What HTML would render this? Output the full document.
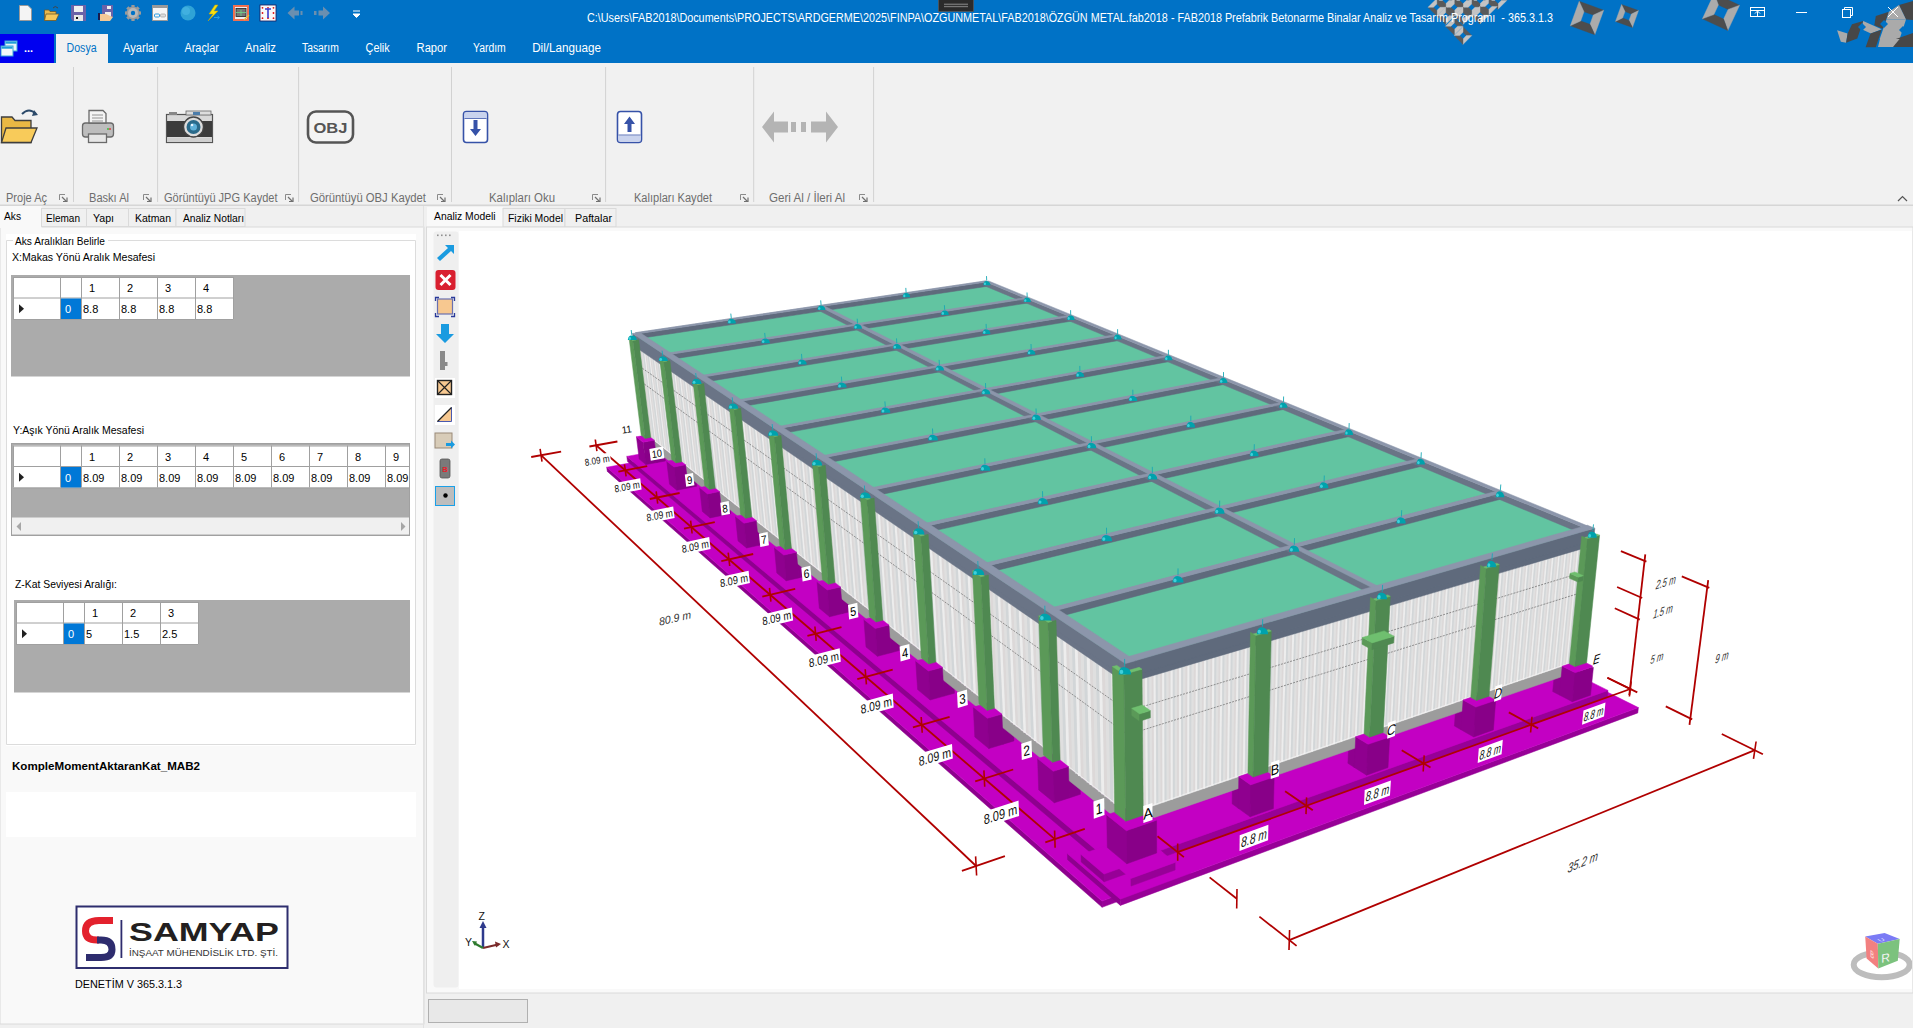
<!DOCTYPE html><html><head><meta charset="utf-8"><title>FAB2018</title><style>html,body{margin:0;padding:0;overflow:hidden;background:#F0F0F0}svg{display:block}text{font-family:"Liberation Sans",sans-serif}</style></head><body>
<svg width="1913" height="1028" viewBox="0 0 1913 1028">
<rect x="0" y="0" width="1913" height="63" fill="#0072C6" />
<g opacity="1">
<polygon points="1445.7,-8.3 1454.5,0.5 1449.0,0.5 1445.7,-2.8" fill="#5A5A5A" stroke="#5A5A5A" stroke-width="0.4"/><polygon points="1454.5,0.5 1445.7,9.3 1445.7,3.8 1449.0,0.5" fill="#C4C4C4" stroke="#C4C4C4" stroke-width="0.4"/><polygon points="1445.7,9.3 1436.9,0.5 1442.4,0.5 1445.7,3.8" fill="#5A5A5A" stroke="#5A5A5A" stroke-width="0.4"/><polygon points="1436.9,0.5 1445.7,-8.3 1445.7,-2.8 1442.4,0.5" fill="#C4C4C4" stroke="#C4C4C4" stroke-width="0.4"/>
<polygon points="1463.0,-8.3 1471.8,0.5 1466.3,0.5 1463.0,-2.8" fill="#5A5A5A" stroke="#5A5A5A" stroke-width="0.4"/><polygon points="1471.8,0.5 1463.0,9.3 1463.0,3.8 1466.3,0.5" fill="#C4C4C4" stroke="#C4C4C4" stroke-width="0.4"/><polygon points="1463.0,9.3 1454.2,0.5 1459.7,0.5 1463.0,3.8" fill="#5A5A5A" stroke="#5A5A5A" stroke-width="0.4"/><polygon points="1454.2,0.5 1463.0,-8.3 1463.0,-2.8 1459.7,0.5" fill="#C4C4C4" stroke="#C4C4C4" stroke-width="0.4"/>
<polygon points="1480.0,-8.3 1488.8,0.5 1483.3,0.5 1480.0,-2.8" fill="#5A5A5A" stroke="#5A5A5A" stroke-width="0.4"/><polygon points="1488.8,0.5 1480.0,9.3 1480.0,3.8 1483.3,0.5" fill="#C4C4C4" stroke="#C4C4C4" stroke-width="0.4"/><polygon points="1480.0,9.3 1471.2,0.5 1476.7,0.5 1480.0,3.8" fill="#5A5A5A" stroke="#5A5A5A" stroke-width="0.4"/><polygon points="1471.2,0.5 1480.0,-8.3 1480.0,-2.8 1476.7,0.5" fill="#C4C4C4" stroke="#C4C4C4" stroke-width="0.4"/>
<polygon points="1498.0,-8.3 1506.8,0.5 1501.3,0.5 1498.0,-2.8" fill="#5A5A5A" stroke="#5A5A5A" stroke-width="0.4"/><polygon points="1506.8,0.5 1498.0,9.3 1498.0,3.8 1501.3,0.5" fill="#C4C4C4" stroke="#C4C4C4" stroke-width="0.4"/><polygon points="1498.0,9.3 1489.2,0.5 1494.7,0.5 1498.0,3.8" fill="#5A5A5A" stroke="#5A5A5A" stroke-width="0.4"/><polygon points="1489.2,0.5 1498.0,-8.3 1498.0,-2.8 1494.7,0.5" fill="#C4C4C4" stroke="#C4C4C4" stroke-width="0.4"/>
<polygon points="1436.8,-1.5 1445.6,7.3 1440.1,7.3 1436.8,4.0" fill="#5A5A5A" stroke="#5A5A5A" stroke-width="0.4"/><polygon points="1445.6,7.3 1436.8,16.1 1436.8,10.6 1440.1,7.3" fill="#C4C4C4" stroke="#C4C4C4" stroke-width="0.4"/><polygon points="1436.8,16.1 1428.0,7.3 1433.5,7.3 1436.8,10.6" fill="#5A5A5A" stroke="#5A5A5A" stroke-width="0.4"/><polygon points="1428.0,7.3 1436.8,-1.5 1436.8,4.0 1433.5,7.3" fill="#C4C4C4" stroke="#C4C4C4" stroke-width="0.4"/>
<polygon points="1454.3,-1.5 1463.1,7.3 1457.6,7.3 1454.3,4.0" fill="#5A5A5A" stroke="#5A5A5A" stroke-width="0.4"/><polygon points="1463.1,7.3 1454.3,16.1 1454.3,10.6 1457.6,7.3" fill="#C4C4C4" stroke="#C4C4C4" stroke-width="0.4"/><polygon points="1454.3,16.1 1445.5,7.3 1451.0,7.3 1454.3,10.6" fill="#5A5A5A" stroke="#5A5A5A" stroke-width="0.4"/><polygon points="1445.5,7.3 1454.3,-1.5 1454.3,4.0 1451.0,7.3" fill="#C4C4C4" stroke="#C4C4C4" stroke-width="0.4"/>
<polygon points="1471.6,-1.5 1480.4,7.3 1474.9,7.3 1471.6,4.0" fill="#5A5A5A" stroke="#5A5A5A" stroke-width="0.4"/><polygon points="1480.4,7.3 1471.6,16.1 1471.6,10.6 1474.9,7.3" fill="#C4C4C4" stroke="#C4C4C4" stroke-width="0.4"/><polygon points="1471.6,16.1 1462.8,7.3 1468.3,7.3 1471.6,10.6" fill="#5A5A5A" stroke="#5A5A5A" stroke-width="0.4"/><polygon points="1462.8,7.3 1471.6,-1.5 1471.6,4.0 1468.3,7.3" fill="#C4C4C4" stroke="#C4C4C4" stroke-width="0.4"/>
<polygon points="1488.5,-2.3 1497.3,6.5 1491.8,6.5 1488.5,3.2" fill="#5A5A5A" stroke="#5A5A5A" stroke-width="0.4"/><polygon points="1497.3,6.5 1488.5,15.3 1488.5,9.8 1491.8,6.5" fill="#C4C4C4" stroke="#C4C4C4" stroke-width="0.4"/><polygon points="1488.5,15.3 1479.7,6.5 1485.2,6.5 1488.5,9.8" fill="#5A5A5A" stroke="#5A5A5A" stroke-width="0.4"/><polygon points="1479.7,6.5 1488.5,-2.3 1488.5,3.2 1485.2,6.5" fill="#C4C4C4" stroke="#C4C4C4" stroke-width="0.4"/>
<polygon points="1445.7,6.9 1454.5,15.7 1449.0,15.7 1445.7,12.4" fill="#5A5A5A" stroke="#5A5A5A" stroke-width="0.4"/><polygon points="1454.5,15.7 1445.7,24.5 1445.7,19.0 1449.0,15.7" fill="#C4C4C4" stroke="#C4C4C4" stroke-width="0.4"/><polygon points="1445.7,24.5 1436.9,15.7 1442.4,15.7 1445.7,19.0" fill="#5A5A5A" stroke="#5A5A5A" stroke-width="0.4"/><polygon points="1436.9,15.7 1445.7,6.9 1445.7,12.4 1442.4,15.7" fill="#C4C4C4" stroke="#C4C4C4" stroke-width="0.4"/>
<polygon points="1463.0,6.9 1471.8,15.7 1466.3,15.7 1463.0,12.4" fill="#5A5A5A" stroke="#5A5A5A" stroke-width="0.4"/><polygon points="1471.8,15.7 1463.0,24.5 1463.0,19.0 1466.3,15.7" fill="#C4C4C4" stroke="#C4C4C4" stroke-width="0.4"/><polygon points="1463.0,24.5 1454.2,15.7 1459.7,15.7 1463.0,19.0" fill="#5A5A5A" stroke="#5A5A5A" stroke-width="0.4"/><polygon points="1454.2,15.7 1463.0,6.9 1463.0,12.4 1459.7,15.7" fill="#C4C4C4" stroke="#C4C4C4" stroke-width="0.4"/>
<polygon points="1480.0,6.4 1488.8,15.2 1483.3,15.2 1480.0,11.9" fill="#5A5A5A" stroke="#5A5A5A" stroke-width="0.4"/><polygon points="1488.8,15.2 1480.0,24.0 1480.0,18.5 1483.3,15.2" fill="#C4C4C4" stroke="#C4C4C4" stroke-width="0.4"/><polygon points="1480.0,24.0 1471.2,15.2 1476.7,15.2 1480.0,18.5" fill="#5A5A5A" stroke="#5A5A5A" stroke-width="0.4"/><polygon points="1471.2,15.2 1480.0,6.4 1480.0,11.9 1476.7,15.2" fill="#C4C4C4" stroke="#C4C4C4" stroke-width="0.4"/>
<polygon points="1454.3,17.4 1463.1,26.2 1457.6,26.2 1454.3,22.9" fill="#5A5A5A" stroke="#5A5A5A" stroke-width="0.4"/><polygon points="1463.1,26.2 1454.3,35.0 1454.3,29.5 1457.6,26.2" fill="#C4C4C4" stroke="#C4C4C4" stroke-width="0.4"/><polygon points="1454.3,35.0 1445.5,26.2 1451.0,26.2 1454.3,29.5" fill="#5A5A5A" stroke="#5A5A5A" stroke-width="0.4"/><polygon points="1445.5,26.2 1454.3,17.4 1454.3,22.9 1451.0,26.2" fill="#C4C4C4" stroke="#C4C4C4" stroke-width="0.4"/>
<polygon points="1463.0,26.8 1471.8,35.6 1466.3,35.6 1463.0,32.3" fill="#5A5A5A" stroke="#5A5A5A" stroke-width="0.4"/><polygon points="1471.8,35.6 1463.0,44.4 1463.0,38.9 1466.3,35.6" fill="#C4C4C4" stroke="#C4C4C4" stroke-width="0.4"/><polygon points="1463.0,44.4 1454.2,35.6 1459.7,35.6 1463.0,38.9" fill="#5A5A5A" stroke="#5A5A5A" stroke-width="0.4"/><polygon points="1454.2,35.6 1463.0,26.8 1463.0,32.3 1459.7,35.6" fill="#C4C4C4" stroke="#C4C4C4" stroke-width="0.4"/>
<polygon points="1579.2,1.3 1603.7,10.2 1593.3,15.0 1584.0,11.7" fill="#4D4D4D" stroke="#4D4D4D" stroke-width="0.4"/><polygon points="1603.7,10.2 1594.8,34.7 1590.0,24.3 1593.3,15.0" fill="#ABABAB" stroke="#ABABAB" stroke-width="0.4"/><polygon points="1594.8,34.7 1570.3,25.8 1580.7,21.0 1590.0,24.3" fill="#4D4D4D" stroke="#4D4D4D" stroke-width="0.4"/><polygon points="1570.3,25.8 1579.2,1.3 1584.0,11.7 1580.7,21.0" fill="#ABABAB" stroke="#ABABAB" stroke-width="0.4"/>
<polygon points="1621.6,4.5 1638.5,10.6 1631.4,14.0 1625.0,11.6" fill="#4D4D4D" stroke="#4D4D4D" stroke-width="0.4"/><polygon points="1638.5,10.6 1632.4,27.5 1629.0,20.4 1631.4,14.0" fill="#ABABAB" stroke="#ABABAB" stroke-width="0.4"/><polygon points="1632.4,27.5 1615.5,21.4 1622.6,18.0 1629.0,20.4" fill="#4D4D4D" stroke="#4D4D4D" stroke-width="0.4"/><polygon points="1615.5,21.4 1621.6,4.5 1625.0,11.6 1622.6,18.0" fill="#ABABAB" stroke="#ABABAB" stroke-width="0.4"/>
<polygon points="1714.2,-6.6 1739.6,5.2 1728.1,9.4 1718.4,4.9" fill="#4D4D4D" stroke="#4D4D4D" stroke-width="0.4"/><polygon points="1739.6,5.2 1727.8,30.6 1723.6,19.1 1728.1,9.4" fill="#ABABAB" stroke="#ABABAB" stroke-width="0.4"/><polygon points="1727.8,30.6 1702.4,18.8 1713.9,14.6 1723.6,19.1" fill="#4D4D4D" stroke="#4D4D4D" stroke-width="0.4"/><polygon points="1702.4,18.8 1714.2,-6.6 1718.4,4.9 1713.9,14.6" fill="#ABABAB" stroke="#ABABAB" stroke-width="0.4"/>
<polygon points="1837.1,30.2 1847.6,33.6 1846.1,42.8 1840.8,41.8" fill="#AAAAAA"/>
<polygon points="1852,24.3 1863.2,20.9 1857.3,38.4 1846.1,42.8 1847.6,33.6" fill="#474747"/>
<polygon points="1863.2,20.9 1881.6,29.2 1870.9,33.6 1861.7,29.2" fill="#AAAAAA"/>
<polygon points="1875.8,16 1888.9,11.7 1882.6,28.7 1874.3,25.3" fill="#474747"/>
<polygon points="1870.5,33.6 1881.6,29.7 1875.8,47.2 1865.6,47.2" fill="#474747"/>
<polygon points="1886.5,19.5 1906,19.5 1899.6,38.9 1879.7,38.9" fill="#AAAAAA"/>
<polygon points="1899,5 1913,1 1913,20 1906,19.5" fill="#474747"/>
<polygon points="1888.9,11.7 1899,5 1906,19.5 1886.5,19.5" fill="#AAAAAA"/>
<polygon points="1893,40 1913,33 1913,47 1888,47" fill="#474747"/>
<polygon points="1880,39 1899.6,38.9 1893,47 1878,47" fill="#AAAAAA"/>
<polygon points="1858,27 1862,23 1866,27 1862,31" fill="#0072C6"/>
<polygon points="1880,24 1884,20 1888,24 1884,28" fill="#0072C6"/>
<polygon points="1899,30 1903,26 1907,30 1903,34" fill="#0072C6"/>
</g>
<rect x="938.5" y="-1" width="35" height="12.5" fill="#2B2B2B" stroke="#6B5A50" stroke-width="0.6" />
<rect x="944" y="3.6" width="24" height="1.3" fill="#777" />
<rect x="944" y="5.9" width="24" height="1.3" fill="#777" />
<text x="587" y="22" font-size="12" fill="#fff" textLength="966" lengthAdjust="spacingAndGlyphs" text-anchor="start" >C:\Users\FAB2018\Documents\PROJECTS\ARDGERME\2025\FINPA\OZGUNMETAL\FAB2018\ÖZGÜN METAL.fab2018 - FAB2018 Prefabrik Betonarme Binalar Analiz ve Tasarım Programı  - 365.3.1.3</text>
<g fill="none" stroke="#fff" stroke-width="1">
<rect x="1750.5" y="7.5" width="14" height="9"/><line x1="1750" y1="10.5" x2="1765" y2="10.5"/><path d="M1757.5 16 V11.5 M1755 13.5 L1757.5 11 L1760 13.5"/>
<line x1="1796" y1="12.5" x2="1807" y2="12.5"/>
<rect x="1842.5" y="9.5" width="8" height="8"/><path d="M1844.5 9.5 V7.5 H1852.5 V15.5 H1850.5"/>
<path d="M1888 7 L1898 17 M1898 7 L1888 17"/>
</g>
<path d="M19.5 5.5 H28 L31.5 9 V20.5 H19.5 Z" fill="#F4F4F4" stroke="#9A9A9A" stroke-width="1"/><path d="M44.5 10 H49 L50 11.5 H56 V20.5 H44.5 Z" fill="#E8B84A" stroke="#6A5A30" stroke-width="0.8"/><path d="M46 14 H59 L56 20.5 H44.5 Z" fill="#F5C85A" stroke="#6A5A30" stroke-width="0.8"/><path d="M53 8 Q55 5 58 8" fill="none" stroke="#444" stroke-width="1"/><path d="M71 5 H86 V21 H73 L71 19 Z" fill="#6B62A8"/><rect x="74" y="6" width="9" height="6" fill="#F0F0F0"/><rect x="74" y="15" width="9" height="6" fill="#E8E8E8"/><rect x="76" y="17" width="2" height="2" fill="#111"/><path d="M102 5 H113 V17 H102 Z" fill="#6B62A8"/><rect x="107" y="6" width="4" height="3" fill="#F0F0F0"/><rect x="105" y="12" width="6" height="5" fill="#EEE"/><path d="M98 13 H100 V20 H98 Z" fill="#1A1A4A"/><path d="M100 14 H106 Q110 16 113 17 L110 21 H100 Z" fill="#F3C896"/><g transform="translate(133,13)"><circle r="6.5" fill="#9A9A9A"/><g fill="#9A9A9A"><rect x="-1.6" y="-8" width="3.2" height="3" transform="rotate(0)"/><rect x="-1.6" y="-8" width="3.2" height="3" transform="rotate(45)"/><rect x="-1.6" y="-8" width="3.2" height="3" transform="rotate(90)"/><rect x="-1.6" y="-8" width="3.2" height="3" transform="rotate(135)"/><rect x="-1.6" y="-8" width="3.2" height="3" transform="rotate(180)"/><rect x="-1.6" y="-8" width="3.2" height="3" transform="rotate(225)"/><rect x="-1.6" y="-8" width="3.2" height="3" transform="rotate(270)"/><rect x="-1.6" y="-8" width="3.2" height="3" transform="rotate(315)"/></g><circle r="5" fill="#B8B8B8"/><circle r="2.2" fill="#0072C6"/></g><rect x="152.5" y="5.5" width="15" height="15" fill="#F6F6F6" stroke="#999" stroke-width="1"/><rect x="153" y="6" width="14" height="2" fill="#9A9A9A"/><rect x="154.5" y="14" width="5" height="3" rx="1" fill="none" stroke="#2A9BE0" stroke-width="1"/><rect x="160.5" y="14" width="5" height="3" rx="1" fill="#DDD" stroke="#AAA" stroke-width="0.8"/><circle cx="188" cy="13" r="7.5" fill="#2FA3D6"/><circle cx="186" cy="11" r="4" fill="#4DB9E6" opacity="0.6"/><path d="M215 5 L209 14 H213 L208 21 L218 11 H214 L218 5 Z" fill="#F6E010" stroke="#C8A000" stroke-width="0.5"/><path d="M214 17.5 H219 M217.5 16 L219.5 17.5 L217.5 19" stroke="#26A0E8" fill="none" stroke-width="1"/><rect x="233" y="5" width="16" height="16" fill="#F07050"/><rect x="235" y="7" width="12" height="12" fill="#EEE"/><rect x="236" y="8.5" width="10" height="8" fill="#777" stroke="#222" stroke-width="0.8"/><path d="M236 12.5 H246 M241 10 V16" stroke="#6CD88A" stroke-width="0.8"/><path d="M244 20 L249 15" stroke="#E8C030" stroke-width="1.2"/><rect x="260" y="5" width="16" height="16" fill="#F8F8F8" stroke="#1A1A5A" stroke-width="0.8"/><circle cx="262.5" cy="7.8" r="0.9" fill="#E01010"/><circle cx="262.5" cy="13" r="0.9" fill="#E01010"/><circle cx="262.5" cy="18.2" r="0.9" fill="#E01010"/><circle cx="268" cy="7.8" r="0.9" fill="#E01010"/><circle cx="268" cy="18.2" r="0.9" fill="#E01010"/><circle cx="273.5" cy="7.8" r="0.9" fill="#E01010"/><circle cx="273.5" cy="13" r="0.9" fill="#E01010"/><circle cx="273.5" cy="18.2" r="0.9" fill="#E01010"/><path d="M265 9 H271 M268 9 V18" stroke="#3A3AD0" stroke-width="1.6"/><path d="M287.5 13 L294.5 6.5 V10.5 H299 V15.5 H294.5 V19.5 Z" fill="#6A8FB0"/><rect x="300.5" y="11" width="2" height="4" fill="#6A8FB0"/><path d="M330 13 L323 6.5 V10.5 H318.5 V15.5 H323 V19.5 Z" fill="#6A8FB0"/><rect x="314" y="11" width="2.5" height="4" fill="#6A8FB0"/><path d="M353 11 H360 M353 14 H360 L356.5 17.5 Z" stroke="#fff" fill="#fff" stroke-width="1"/>
<rect x="0" y="34" width="54" height="29" fill="#0000F0" />
<rect x="5" y="41" width="12" height="10" fill="#E8F4FA" stroke="#39A8D8" stroke-width="1" />
<rect x="1" y="46" width="12" height="10" fill="#F2F7FA" stroke="#39A8D8" stroke-width="1" />
<rect x="1.5" y="46.5" width="11" height="2.2" fill="#1E9FD8" />
<rect x="5.5" y="41.5" width="11" height="2.2" fill="#1E9FD8" />
<text x="24" y="52" font-size="11" fill="#fff" font-weight="bold" text-anchor="start" >...</text>
<rect x="56" y="34" width="52" height="30" fill="#F1F1F1" />
<text x="66.5" y="51.5" font-size="12" fill="#0072C6" textLength="30.1" lengthAdjust="spacingAndGlyphs" text-anchor="start" >Dosya</text>
<text x="123" y="51.5" font-size="12" fill="#fff" textLength="35" lengthAdjust="spacingAndGlyphs" text-anchor="start" >Ayarlar</text>
<text x="184.4" y="51.5" font-size="12" fill="#fff" textLength="34.6" lengthAdjust="spacingAndGlyphs" text-anchor="start" >Araçlar</text>
<text x="245" y="51.5" font-size="12" fill="#fff" textLength="31" lengthAdjust="spacingAndGlyphs" text-anchor="start" >Analiz</text>
<text x="302" y="51.5" font-size="12" fill="#fff" textLength="36.8" lengthAdjust="spacingAndGlyphs" text-anchor="start" >Tasarım</text>
<text x="365.6" y="51.5" font-size="12" fill="#fff" textLength="24.1" lengthAdjust="spacingAndGlyphs" text-anchor="start" >Çelik</text>
<text x="416.6" y="51.5" font-size="12" fill="#fff" textLength="30.4" lengthAdjust="spacingAndGlyphs" text-anchor="start" >Rapor</text>
<text x="473" y="51.5" font-size="12" fill="#fff" textLength="32.8" lengthAdjust="spacingAndGlyphs" text-anchor="start" >Yardım</text>
<text x="532.2" y="51.5" font-size="12" fill="#fff" textLength="68.8" lengthAdjust="spacingAndGlyphs" text-anchor="start" >Dil/Language</text>
<rect x="0" y="63" width="1913" height="142" fill="#F1F1F1" />
<rect x="0" y="204.5" width="1913" height="1.5" fill="#D6D6D6" />
<line x1="73.5" y1="67" x2="73.5" y2="202" stroke="#D2D2D2" stroke-width="1" />
<line x1="157.6" y1="67" x2="157.6" y2="202" stroke="#D2D2D2" stroke-width="1" />
<line x1="298.6" y1="67" x2="298.6" y2="202" stroke="#D2D2D2" stroke-width="1" />
<line x1="451.5" y1="67" x2="451.5" y2="202" stroke="#D2D2D2" stroke-width="1" />
<line x1="605.6" y1="67" x2="605.6" y2="202" stroke="#D2D2D2" stroke-width="1" />
<line x1="753.7" y1="67" x2="753.7" y2="202" stroke="#D2D2D2" stroke-width="1" />
<line x1="873.6" y1="67" x2="873.6" y2="202" stroke="#D2D2D2" stroke-width="1" />
<text x="6" y="202" font-size="12" fill="#6E6E6E" textLength="41" lengthAdjust="spacingAndGlyphs" text-anchor="start" >Proje Aç</text>
<path d="M59.5 200 V194.5 H65" stroke="#8A8A8A" fill="none" stroke-width="1"/><path d="M62 197 L66 201 M67 197.5 V201.5 H63" stroke="#707070" fill="none" stroke-width="1.2"/>
<text x="89" y="202" font-size="12" fill="#6E6E6E" textLength="40" lengthAdjust="spacingAndGlyphs" text-anchor="start" >Baskı Al</text>
<path d="M143.5 200 V194.5 H149" stroke="#8A8A8A" fill="none" stroke-width="1"/><path d="M146 197 L150 201 M151 197.5 V201.5 H147" stroke="#707070" fill="none" stroke-width="1.2"/>
<text x="164" y="202" font-size="12" fill="#6E6E6E" textLength="113.5" lengthAdjust="spacingAndGlyphs" text-anchor="start" >Görüntüyü JPG Kaydet</text>
<path d="M285.5 200 V194.5 H291" stroke="#8A8A8A" fill="none" stroke-width="1"/><path d="M288 197 L292 201 M293 197.5 V201.5 H289" stroke="#707070" fill="none" stroke-width="1.2"/>
<text x="310" y="202" font-size="12" fill="#6E6E6E" textLength="116" lengthAdjust="spacingAndGlyphs" text-anchor="start" >Görüntüyü OBJ Kaydet</text>
<path d="M437.5 200 V194.5 H443" stroke="#8A8A8A" fill="none" stroke-width="1"/><path d="M440 197 L444 201 M445 197.5 V201.5 H441" stroke="#707070" fill="none" stroke-width="1.2"/>
<text x="489" y="202" font-size="12" fill="#6E6E6E" textLength="66" lengthAdjust="spacingAndGlyphs" text-anchor="start" >Kalıpları Oku</text>
<path d="M592.5 200 V194.5 H598" stroke="#8A8A8A" fill="none" stroke-width="1"/><path d="M595 197 L599 201 M600 197.5 V201.5 H596" stroke="#707070" fill="none" stroke-width="1.2"/>
<text x="634" y="202" font-size="12" fill="#6E6E6E" textLength="78" lengthAdjust="spacingAndGlyphs" text-anchor="start" >Kalıpları Kaydet</text>
<path d="M740.5 200 V194.5 H746" stroke="#8A8A8A" fill="none" stroke-width="1"/><path d="M743 197 L747 201 M748 197.5 V201.5 H744" stroke="#707070" fill="none" stroke-width="1.2"/>
<text x="769" y="202" font-size="12" fill="#6E6E6E" textLength="76" lengthAdjust="spacingAndGlyphs" text-anchor="start" >Geri Al / İleri Al</text>
<path d="M859.5 200 V194.5 H865" stroke="#8A8A8A" fill="none" stroke-width="1"/><path d="M862 197 L866 201 M867 197.5 V201.5 H863" stroke="#707070" fill="none" stroke-width="1.2"/>
<path d="M1898 201 L1902.5 196.5 L1907 201" stroke="#555" fill="none" stroke-width="1.2"/>
<path d="M1.5 117 H12 L15 120.5 H31 V142.5 H1.5 Z" fill="#E9B844" stroke="#3E3E3E" stroke-width="1.3"/><path d="M6 128 H37 L31 142.5 H1.5 Z" fill="#F8CB5A" stroke="#3E3E3E" stroke-width="1.3"/><path d="M22 114 Q29 107 36 114" fill="none" stroke="#2C4A6A" stroke-width="2"/><path d="M34 110 L38 115 L32 116 Z" fill="#2C4A6A"/><rect x="82.5" y="123" width="31" height="14" rx="3" fill="#BDBDBD" stroke="#6A6A6A" stroke-width="1.3"/><path d="M89 110.5 H103 L106 113.5 V123 H89 Z" fill="#F4F4F4" stroke="#6A6A6A" stroke-width="1.3"/><path d="M92 115 H103 M92 118 H103 M92 121 H103" stroke="#888" stroke-width="0.9"/><rect x="88.5" y="134" width="18" height="8.5" fill="#E6E6E6" stroke="#6A6A6A" stroke-width="1.3"/><circle cx="108" cy="129" r="0.9" fill="#3B3"/><circle cx="110" cy="129" r="0.9" fill="#D33"/><rect x="166.5" y="114.5" width="46" height="28" fill="#D9D9D9" stroke="#555" stroke-width="1.2"/><rect x="167" y="121" width="45" height="16" fill="#3C3C3C"/><rect x="169" y="112" width="8" height="3" fill="#888"/><rect x="186" y="111" width="25" height="4" fill="#DDD" stroke="#666" stroke-width="0.8"/><rect x="193" y="112" width="7" height="3" fill="#4D7DAA"/><circle cx="193.5" cy="127" r="10" fill="#DDD" stroke="#444" stroke-width="1.4"/><circle cx="193.5" cy="127" r="7" fill="#2A6A8A"/><circle cx="193.5" cy="127" r="3.5" fill="#5FB0D8"/><circle cx="192" cy="125" r="1.3" fill="#E8F6FF"/><rect x="167" y="138" width="45" height="4" fill="#CFCFCF"/><rect x="308" y="111.5" width="45" height="31" rx="8" fill="#F4F4F4" stroke="#555" stroke-width="2.6"/><text x="330.5" y="133" font-size="14" font-weight="bold" fill="#555" text-anchor="middle" textLength="34" lengthAdjust="spacingAndGlyphs">OBJ</text><rect x="463.5" y="111.5" width="24" height="31" rx="3" fill="#FFF" stroke="#3652A8" stroke-width="1.6"/><rect x="464.5" y="112.5" width="22" height="5.5" fill="#C9D3EE"/><path d="M464.5 118.5 H486.5" stroke="#3652A8" stroke-width="0.8"/><path d="M473.5 120 H477.5 V129 H481 L475.5 136 L470 129 H473.5 Z" fill="#3652A8"/><rect x="617.5" y="111.5" width="24" height="31" rx="3" fill="#FFF" stroke="#3652A8" stroke-width="1.6"/><rect x="618.5" y="135.5" width="22" height="6" fill="#C9D3EE"/><path d="M618.5 135 H640.5" stroke="#3652A8" stroke-width="0.8"/><path d="M627.5 132 H631.5 V124 H635 L629.5 116.5 L624 124 H627.5 Z" fill="#3652A8"/><path d="M762 127 L774 111.5 V121.5 H788 V132.5 H774 V142.5 Z" fill="#B4B4B4"/><rect x="791" y="122" width="5" height="10" fill="#B4B4B4"/><rect x="801" y="122" width="5" height="10" fill="#B4B4B4"/><path d="M838 127 L826 111.5 V121.5 H811 V132.5 H826 V142.5 Z" fill="#B4B4B4"/>
<rect x="0" y="206" width="425" height="822" fill="#F0F0F0" />
<rect x="0" y="227" width="424" height="797" fill="#F9F9F9" stroke="#DADADA" stroke-width="1" />
<rect x="0" y="206" width="41.5" height="22" fill="#F9F9F9" />
<rect x="41.5" y="208.5" width="45.0" height="18" fill="#F0F0F0" stroke="#DADADA" stroke-width="1" />
<rect x="86.5" y="208.5" width="42.0" height="18" fill="#F0F0F0" stroke="#DADADA" stroke-width="1" />
<rect x="128.5" y="208.5" width="47.5" height="18" fill="#F0F0F0" stroke="#DADADA" stroke-width="1" />
<rect x="176" y="208.5" width="69" height="18" fill="#F0F0F0" stroke="#DADADA" stroke-width="1" />
<text x="4" y="220" font-size="11" fill="#000" textLength="17" lengthAdjust="spacingAndGlyphs" text-anchor="start" >Aks</text>
<text x="46" y="222" font-size="11" fill="#000" textLength="34" lengthAdjust="spacingAndGlyphs" text-anchor="start" >Eleman</text>
<text x="93" y="222" font-size="11" fill="#000" textLength="21" lengthAdjust="spacingAndGlyphs" text-anchor="start" >Yapı</text>
<text x="135" y="222" font-size="11" fill="#000" textLength="36" lengthAdjust="spacingAndGlyphs" text-anchor="start" >Katman</text>
<text x="183" y="222" font-size="11" fill="#000" textLength="61" lengthAdjust="spacingAndGlyphs" text-anchor="start" >Analiz Notları</text>
<rect x="6" y="234" width="410" height="512" fill="#FFFFFF" />
<path d="M13 240.5 H6.5 V744.5 H415.5 V240.5 H108" fill="none" stroke="#DCDCDC" stroke-width="1"/>
<text x="15" y="245" font-size="11" fill="#000" textLength="90" lengthAdjust="spacingAndGlyphs" text-anchor="start" >Aks Aralıkları Belirle</text>
<text x="12" y="261" font-size="11" fill="#000" textLength="143" lengthAdjust="spacingAndGlyphs" text-anchor="start" >X:Makas Yönü Aralık Mesafesi</text>
<rect x="11" y="275" width="399" height="101.5" fill="#ABABAB" />
<rect x="13" y="277" width="220" height="42.0" fill="#FFFFFF" />
<line x1="13" y1="298.0" x2="233" y2="298.0" stroke="#A0A0A0" stroke-width="1" />
<line x1="13" y1="319.5" x2="233" y2="319.5" stroke="#A0A0A0" stroke-width="1" />
<line x1="13.5" y1="277" x2="13.5" y2="319.0" stroke="#A0A0A0" stroke-width="1" />
<line x1="60.5" y1="277" x2="60.5" y2="319.0" stroke="#A0A0A0" stroke-width="1" />
<line x1="81.5" y1="277" x2="81.5" y2="319.0" stroke="#A0A0A0" stroke-width="1" />
<line x1="119.5" y1="277" x2="119.5" y2="319.0" stroke="#A0A0A0" stroke-width="1" />
<line x1="157.5" y1="277" x2="157.5" y2="319.0" stroke="#A0A0A0" stroke-width="1" />
<line x1="195.5" y1="277" x2="195.5" y2="319.0" stroke="#A0A0A0" stroke-width="1" />
<line x1="233.5" y1="277" x2="233.5" y2="319.0" stroke="#A0A0A0" stroke-width="1" />
<line x1="13" y1="277.5" x2="233" y2="277.5" stroke="#A0A0A0" stroke-width="1" />
<rect x="61" y="298.5" width="20" height="20.5" fill="#0078D7" />
<text x="65" y="313.0" font-size="11" fill="#FFFFFF" text-anchor="start" >0</text>
<path d="M19 304.25 L24 308.75 L19 313.25 Z" fill="#202020"/>
<text x="89" y="292.0" font-size="11" fill="#000" text-anchor="start" >1</text>
<text x="127" y="292.0" font-size="11" fill="#000" text-anchor="start" >2</text>
<text x="165" y="292.0" font-size="11" fill="#000" text-anchor="start" >3</text>
<text x="203" y="292.0" font-size="11" fill="#000" text-anchor="start" >4</text>
<text x="83" y="313.0" font-size="11" fill="#000" text-anchor="start" >8.8</text>
<text x="121" y="313.0" font-size="11" fill="#000" text-anchor="start" >8.8</text>
<text x="159" y="313.0" font-size="11" fill="#000" text-anchor="start" >8.8</text>
<text x="197" y="313.0" font-size="11" fill="#000" text-anchor="start" >8.8</text>
<text x="13" y="434" font-size="11" fill="#000" textLength="131" lengthAdjust="spacingAndGlyphs" text-anchor="start" >Y:Aşık Yönü Aralık Mesafesi</text>
<rect x="11" y="443.5" width="399" height="92.0" fill="#ABABAB" />
<rect x="13" y="445.5" width="396" height="42.0" fill="#FFFFFF" />
<line x1="13" y1="466.5" x2="409" y2="466.5" stroke="#A0A0A0" stroke-width="1" />
<line x1="13" y1="488.0" x2="409" y2="488.0" stroke="#A0A0A0" stroke-width="1" />
<line x1="13.5" y1="445.5" x2="13.5" y2="487.5" stroke="#A0A0A0" stroke-width="1" />
<line x1="60.5" y1="445.5" x2="60.5" y2="487.5" stroke="#A0A0A0" stroke-width="1" />
<line x1="81.5" y1="445.5" x2="81.5" y2="487.5" stroke="#A0A0A0" stroke-width="1" />
<line x1="119.5" y1="445.5" x2="119.5" y2="487.5" stroke="#A0A0A0" stroke-width="1" />
<line x1="157.5" y1="445.5" x2="157.5" y2="487.5" stroke="#A0A0A0" stroke-width="1" />
<line x1="195.5" y1="445.5" x2="195.5" y2="487.5" stroke="#A0A0A0" stroke-width="1" />
<line x1="233.5" y1="445.5" x2="233.5" y2="487.5" stroke="#A0A0A0" stroke-width="1" />
<line x1="271.5" y1="445.5" x2="271.5" y2="487.5" stroke="#A0A0A0" stroke-width="1" />
<line x1="309.5" y1="445.5" x2="309.5" y2="487.5" stroke="#A0A0A0" stroke-width="1" />
<line x1="347.5" y1="445.5" x2="347.5" y2="487.5" stroke="#A0A0A0" stroke-width="1" />
<line x1="385.5" y1="445.5" x2="385.5" y2="487.5" stroke="#A0A0A0" stroke-width="1" />
<line x1="13" y1="446.0" x2="409" y2="446.0" stroke="#A0A0A0" stroke-width="1" />
<rect x="61" y="467.0" width="20" height="20.5" fill="#0078D7" />
<text x="65" y="481.5" font-size="11" fill="#FFFFFF" text-anchor="start" >0</text>
<path d="M19 472.75 L24 477.25 L19 481.75 Z" fill="#202020"/>
<text x="89" y="460.5" font-size="11" fill="#000" text-anchor="start" >1</text>
<text x="127" y="460.5" font-size="11" fill="#000" text-anchor="start" >2</text>
<text x="165" y="460.5" font-size="11" fill="#000" text-anchor="start" >3</text>
<text x="203" y="460.5" font-size="11" fill="#000" text-anchor="start" >4</text>
<text x="241" y="460.5" font-size="11" fill="#000" text-anchor="start" >5</text>
<text x="279" y="460.5" font-size="11" fill="#000" text-anchor="start" >6</text>
<text x="317" y="460.5" font-size="11" fill="#000" text-anchor="start" >7</text>
<text x="355" y="460.5" font-size="11" fill="#000" text-anchor="start" >8</text>
<text x="393" y="460.5" font-size="11" fill="#000" text-anchor="start" >9</text>
<text x="83" y="481.5" font-size="11" fill="#000" text-anchor="start" >8.09</text>
<text x="121" y="481.5" font-size="11" fill="#000" text-anchor="start" >8.09</text>
<text x="159" y="481.5" font-size="11" fill="#000" text-anchor="start" >8.09</text>
<text x="197" y="481.5" font-size="11" fill="#000" text-anchor="start" >8.09</text>
<text x="235" y="481.5" font-size="11" fill="#000" text-anchor="start" >8.09</text>
<text x="273" y="481.5" font-size="11" fill="#000" text-anchor="start" >8.09</text>
<text x="311" y="481.5" font-size="11" fill="#000" text-anchor="start" >8.09</text>
<text x="349" y="481.5" font-size="11" fill="#000" text-anchor="start" >8.09</text>
<text x="387" y="481.5" font-size="11" fill="#000" text-anchor="start" >8.09</text>
<rect x="12" y="517.5" width="397" height="17" fill="#F0F0F0" />
<path d="M16.5 526.5 L21 522 V531 Z" fill="#A6A6A6"/><path d="M405.5 526.5 L401 522 V531 Z" fill="#A6A6A6"/>
<rect x="11.5" y="443.5" width="398" height="92" fill="none" stroke="#A0A0A0" stroke-width="1"/>
<text x="15" y="588" font-size="11" fill="#000" textLength="102" lengthAdjust="spacingAndGlyphs" text-anchor="start" >Z-Kat Seviyesi Aralığı:</text>
<rect x="14" y="600" width="396" height="92.5" fill="#ABABAB" />
<rect x="16" y="602" width="182" height="42.0" fill="#FFFFFF" />
<line x1="16" y1="623.0" x2="198" y2="623.0" stroke="#A0A0A0" stroke-width="1" />
<line x1="16" y1="644.5" x2="198" y2="644.5" stroke="#A0A0A0" stroke-width="1" />
<line x1="16.5" y1="602" x2="16.5" y2="644.0" stroke="#A0A0A0" stroke-width="1" />
<line x1="63.5" y1="602" x2="63.5" y2="644.0" stroke="#A0A0A0" stroke-width="1" />
<line x1="84.5" y1="602" x2="84.5" y2="644.0" stroke="#A0A0A0" stroke-width="1" />
<line x1="122.5" y1="602" x2="122.5" y2="644.0" stroke="#A0A0A0" stroke-width="1" />
<line x1="160.5" y1="602" x2="160.5" y2="644.0" stroke="#A0A0A0" stroke-width="1" />
<line x1="198.5" y1="602" x2="198.5" y2="644.0" stroke="#A0A0A0" stroke-width="1" />
<line x1="16" y1="602.5" x2="198" y2="602.5" stroke="#A0A0A0" stroke-width="1" />
<rect x="64" y="623.5" width="20" height="20.5" fill="#0078D7" />
<text x="68" y="638.0" font-size="11" fill="#FFFFFF" text-anchor="start" >0</text>
<path d="M22 629.25 L27 633.75 L22 638.25 Z" fill="#202020"/>
<text x="92" y="617.0" font-size="11" fill="#000" text-anchor="start" >1</text>
<text x="130" y="617.0" font-size="11" fill="#000" text-anchor="start" >2</text>
<text x="168" y="617.0" font-size="11" fill="#000" text-anchor="start" >3</text>
<text x="86" y="638.0" font-size="11" fill="#000" text-anchor="start" >5</text>
<text x="124" y="638.0" font-size="11" fill="#000" text-anchor="start" >1.5</text>
<text x="162" y="638.0" font-size="11" fill="#000" text-anchor="start" >2.5</text>
<text x="12" y="770" font-size="11" fill="#000" textLength="188" lengthAdjust="spacingAndGlyphs" font-weight="bold" text-anchor="start" >KompleMomentAktaranKat_MAB2</text>
<rect x="6" y="792" width="410" height="45" fill="#FFFFFF" />
<rect x="76.5" y="906.5" width="211" height="61.5" fill="#FFFFFF" stroke="#2E2E6E" stroke-width="2" />
<path d="M113 920.5 H99 Q85.5 920.5 85.5 931 Q85.5 940 97 940 L99 940" fill="none" stroke="#E3212D" stroke-width="7"/>
<path d="M97 940 H101 Q112 940 112 949.5 Q112 957.5 101 957.5 H86" fill="none" stroke="#2E2C6E" stroke-width="7"/>
<rect x="120.5" y="920" width="1.8" height="38" fill="#2E2C6E" />
<text x="129" y="940.5" font-size="26.5" fill="#231F20" textLength="150" lengthAdjust="spacingAndGlyphs" font-weight="bold" text-anchor="start" >SAMYAP</text>
<text x="129" y="955.5" font-size="9" fill="#333" textLength="149" lengthAdjust="spacingAndGlyphs" text-anchor="start" >İNŞAAT MÜHENDİSLİK LTD. ŞTİ.</text>
<text x="75" y="988" font-size="11.5" fill="#000" textLength="107" lengthAdjust="spacingAndGlyphs" text-anchor="start" >DENETİM V 365.3.1.3</text>
<rect x="425" y="206" width="1488" height="822" fill="#F0F0F0" />
<line x1="423.5" y1="206" x2="423.5" y2="1028" stroke="#E2E2E2" stroke-width="1" />
<rect x="427" y="207" width="76" height="22" fill="#F9F9F9" />
<rect x="503" y="208.5" width="62" height="18.5" fill="#F0F0F0" stroke="#DADADA" stroke-width="1" />
<rect x="565" y="208.5" width="51" height="18.5" fill="#F0F0F0" stroke="#DADADA" stroke-width="1" />
<text x="434" y="220" font-size="11" fill="#000" textLength="61.5" lengthAdjust="spacingAndGlyphs" text-anchor="start" >Analiz Modeli</text>
<text x="508" y="222" font-size="11" fill="#000" textLength="55" lengthAdjust="spacingAndGlyphs" text-anchor="start" >Fiziki Model</text>
<text x="575" y="222" font-size="11" fill="#000" textLength="37" lengthAdjust="spacingAndGlyphs" text-anchor="start" >Paftalar</text>
<rect x="426.5" y="227" width="1486.5" height="766" fill="#F9F9F9" stroke="#DADADA" stroke-width="1" />
<rect x="459" y="231" width="1454" height="758" fill="#FFFFFF" />
<rect x="433.5" y="231.5" width="25" height="756" fill="#EFEFEF" rx="3" />
<rect x="437" y="234.5" width="1.6" height="1.6" fill="#909090"/><rect x="441" y="234.5" width="1.6" height="1.6" fill="#909090"/><rect x="445" y="234.5" width="1.6" height="1.6" fill="#909090"/><rect x="449" y="234.5" width="1.6" height="1.6" fill="#909090"/>
<path d="M437 258 L448 248 L445 245 H454 V254 L451 251 L440 261 Z" fill="#1A9BE0"/><rect x="435.5" y="270" width="20" height="20" rx="3" fill="#D92030"/><path d="M440.5 275 L450.5 285 M450.5 275 L440.5 285" stroke="#fff" stroke-width="3"/><rect x="437.5" y="299" width="15" height="15" fill="#F7C890" stroke="#6A70B0" stroke-width="1.2"/><path d="M435.5 301 V297.5 H439 M451 297.5 H454.5 V301 M454.5 313 V316.5 H451 M439 316.5 H435.5 V313" stroke="#2A3A9A" fill="none" stroke-width="1.3"/><path d="M441 324 H449 V334 H454 L445 343 L436 334 H441 Z" fill="#1A9BE0"/><path d="M440 351 H445 V362 H447.5 V366 H445 V370 H440 Z" fill="#8A8A8A"/><rect x="435" y="378" width="20" height="20" fill="#FFFFFF"/><rect x="437.5" y="380.5" width="14" height="14" fill="#F7C890" stroke="#222" stroke-width="1.4"/><path d="M437.5 380.5 L451.5 394.5 M451.5 380.5 L437.5 394.5" stroke="#222" stroke-width="1.2"/><rect x="435" y="405" width="20" height="20" fill="#FFFFFF"/><path d="M437.5 421.5 L451.5 407.5 V421.5 Z" fill="#F7C890" stroke="#4A5AB0" stroke-width="1"/><path d="M437.5 421.5 L451.5 407.5" stroke="#222" stroke-width="1.3"/><rect x="435" y="433" width="17" height="15" fill="#D8CCB8" stroke="#9A8A78" stroke-width="1"/><path d="M446 443 H451 V440.5 L455 444.5 L451 448.5 V446 H446 Z" fill="#1A9BE0"/><rect x="440" y="459" width="10" height="19" rx="2" fill="#7A7A7A" stroke="#555" stroke-width="0.8"/><text x="445" y="472" font-size="7.5" font-weight="bold" fill="#E8202A" text-anchor="middle">B</text><rect x="435.5" y="486.5" width="19" height="19" fill="#BDBDBD" stroke="#1AA0E8" stroke-width="1"/><circle cx="445.5" cy="495.5" r="2.2" fill="#000"/>
<rect x="428.5" y="999.5" width="99" height="23" fill="#E8E8E8" stroke="#B0B0B0" stroke-width="1" />
<g><path d="M483 948 L483 925" stroke="#2E3A8C" stroke-width="2.5"/><path d="M479.5 928 L483 921 L486.5 928 Z" fill="#2E3A8C"/><path d="M483 948 L498 944.5" stroke="#7A2A2A" stroke-width="2.2"/><path d="M495 941.5 L501 944 L496 947.5 Z" fill="#7A2A2A"/><path d="M483 948 L474 943" stroke="#2E7A2E" stroke-width="2.2"/><path d="M472 941 L477 941.5 L475 946 Z" fill="#2E7A2E"/></g>
<text x="478.5" y="920" font-size="10.5" fill="#111" text-anchor="start" >Z</text>
<text x="465" y="946" font-size="10.5" fill="#111" text-anchor="start" >Y</text>
<text x="502.5" y="948" font-size="10.5" fill="#111" text-anchor="start" >X</text>
<ellipse cx="1881.7" cy="964.7" rx="28" ry="12.5" fill="none" stroke="#BDBDBD" stroke-width="6"/>
<path d="M1865.2 936.5 L1884.6 933 L1899.7 938.9 L1877.8 943.8 Z" fill="#7B7BF5"/>
<path d="M1865.2 936.5 L1877.8 943.8 L1878.3 968.6 L1866.6 958.4 Z" fill="#F28080"/>
<path d="M1877.8 943.8 L1899.7 938.9 L1897.8 960.8 L1878.3 968.6 Z" fill="#7CC27E"/>
<text x="0" y="0" font-size="12" fill="#F4F4F4" transform="matrix(1,-0.22,0,1,1885.5,962)" text-anchor="middle">R</text>
<text x="0" y="0" font-size="10" fill="#FFE8E8" transform="matrix(0.55,0.45,0,1,1872,958)" text-anchor="middle">B</text>
<text x="0" y="0" font-size="8" fill="#D8D8FF" transform="matrix(1,-0.25,0.6,0.45,1883,941)" text-anchor="middle">U</text>
<line x1="1912.5" y1="231" x2="1912.5" y2="989" stroke="#E8E8E8" stroke-width="1" />
<clipPath id="vp"><rect x="459" y="231" width="1454" height="758"/></clipPath><g clip-path="url(#vp)">
<line x1="976.1" y1="866.0" x2="541.0" y2="455.2" stroke="#B00000" stroke-width="1.8" /><line x1="1004.9" y1="856.2" x2="961.9" y2="870.8" stroke="#B00000" stroke-width="1.8" /><line x1="561.1" y1="451.6" x2="531.2" y2="457.0" stroke="#B00000" stroke-width="1.8" /><line x1="1289.3" y1="940.1" x2="1754.8" y2="750.2" stroke="#B00000" stroke-width="1.8" /><line x1="1259.4" y1="916.6" x2="1296.6" y2="945.9" stroke="#B00000" stroke-width="1.8" /><line x1="1721.8" y1="734.0" x2="1762.9" y2="754.2" stroke="#B00000" stroke-width="1.8" /><line x1="1209.6" y1="877.4" x2="1236.8" y2="898.8" stroke="#B00000" stroke-width="1.8" /><line x1="1629.3" y1="695.0" x2="1645.3" y2="554.3" stroke="#B00000" stroke-width="1.8" /><line x1="1607.4" y1="677.7" x2="1631.8" y2="689.7" stroke="#B00000" stroke-width="1.8" /><line x1="1614.8" y1="608.3" x2="1639.8" y2="619.6" stroke="#B00000" stroke-width="1.8" /><line x1="1617.1" y1="587.0" x2="1642.2" y2="598.0" stroke="#B00000" stroke-width="1.8" /><line x1="1620.9" y1="551.1" x2="1646.4" y2="561.6" stroke="#B00000" stroke-width="1.8" /><line x1="1689.5" y1="724.8" x2="1708.2" y2="580.2" stroke="#B00000" stroke-width="1.8" /><line x1="1665.8" y1="706.4" x2="1692.2" y2="719.4" stroke="#B00000" stroke-width="1.8" /><line x1="1681.8" y1="576.4" x2="1709.3" y2="587.8" stroke="#B00000" stroke-width="1.8" />
<polygon points="1102.1,907.3 607.3,471.4 606.7,467.3 1102.0,901.1" fill="#8E008E" stroke="#8E008E" stroke-width="0.5" stroke-linejoin="round" /><polygon points="1102.1,907.3 1190.4,874.6 1190.4,868.6 1102.0,901.1" fill="#970097" stroke="#970097" stroke-width="0.5" stroke-linejoin="round" /><polygon points="1102.0,901.1 1190.4,868.6 669.3,455.6 606.7,467.3" fill="#C300C3" stroke="#C300C3" stroke-width="0.5" stroke-linejoin="round" /><polygon points="1120.4,905.4 1067.6,859.7 1067.4,853.7 1120.3,899.2" fill="#8E008E" stroke="#8E008E" stroke-width="0.5" stroke-linejoin="round" /><polygon points="1120.4,905.4 1637.8,712.9 1638.4,707.6 1120.3,899.2" fill="#970097" stroke="#970097" stroke-width="0.5" stroke-linejoin="round" /><polygon points="1120.3,899.2 1638.4,707.6 1576.6,676.7 1067.4,853.7" fill="#C300C3" stroke="#C300C3" stroke-width="0.5" stroke-linejoin="round" /><polygon points="1095.7,856.9 627.5,461.6 626.8,456.4 1095.5,849.4" fill="#8E008E" stroke="#8E008E" stroke-width="0.5" stroke-linejoin="round" /><polygon points="1095.7,856.9 1151.1,837.4 1151.0,830.0 1095.5,849.4" fill="#970097" stroke="#970097" stroke-width="0.5" stroke-linejoin="round" /><polygon points="1095.5,849.4 1151.0,830.0 666.8,449.1 626.8,456.4" fill="#C300C3" stroke="#C300C3" stroke-width="0.5" stroke-linejoin="round" /><polygon points="1160.4,858.1 1128.4,832.5 1128.3,825.1 1160.3,850.6" fill="#8E008E" stroke="#8E008E" stroke-width="0.5" stroke-linejoin="round" /><polygon points="1160.4,858.1 1607.3,697.0 1608.0,690.4 1160.3,850.6" fill="#970097" stroke="#970097" stroke-width="0.5" stroke-linejoin="round" /><polygon points="1160.3,850.6 1608.0,690.4 1571.5,672.2 1128.3,825.1" fill="#C300C3" stroke="#C300C3" stroke-width="0.5" stroke-linejoin="round" /><polygon points="1131.0,886.1 1175.1,870.0 1175.1,862.4 1130.9,878.5" fill="#970097" stroke="#970097" stroke-width="0.5" stroke-linejoin="round" /><polygon points="1104.2,881.8 1081.2,862.0 1081.0,854.5 1104.0,874.1" fill="#8E008E" stroke="#8E008E" stroke-width="0.5" stroke-linejoin="round" /><polygon points="1104.2,881.8 1163.2,860.4 1163.2,852.9 1104.0,874.1" fill="#970097" stroke="#970097" stroke-width="0.5" stroke-linejoin="round" /><polygon points="1130.9,878.5 1175.1,862.4 1139.5,834.0 1096.0,849.2" fill="#C300C3" stroke="#C300C3" stroke-width="0.5" stroke-linejoin="round" /><polygon points="1104.0,874.1 1163.2,852.9 1139.5,834.0 1081.0,854.5" fill="#C300C3" stroke="#C300C3" stroke-width="0.5" stroke-linejoin="round" />
<line x1="1054.8" y1="839.1" x2="596.1" y2="445.3" stroke="#B00000" stroke-width="1.8" /><line x1="1084.8" y1="828.9" x2="1045.3" y2="842.4" stroke="#B00000" stroke-width="1.8" /><line x1="1013.2" y1="769.5" x2="975.2" y2="781.4" stroke="#B00000" stroke-width="1.8" /><line x1="949.6" y1="716.8" x2="912.9" y2="727.4" stroke="#B00000" stroke-width="1.8" /><line x1="892.7" y1="669.7" x2="857.3" y2="679.2" stroke="#B00000" stroke-width="1.8" /><line x1="841.5" y1="627.2" x2="807.4" y2="635.8" stroke="#B00000" stroke-width="1.8" /><line x1="795.2" y1="588.9" x2="762.3" y2="596.6" stroke="#B00000" stroke-width="1.8" /><line x1="753.2" y1="554.0" x2="721.3" y2="561.1" stroke="#B00000" stroke-width="1.8" /><line x1="714.8" y1="522.2" x2="684.0" y2="528.6" stroke="#B00000" stroke-width="1.8" /><line x1="679.6" y1="493.0" x2="649.8" y2="499.0" stroke="#B00000" stroke-width="1.8" /><line x1="647.2" y1="466.2" x2="618.4" y2="471.7" stroke="#B00000" stroke-width="1.8" /><line x1="617.4" y1="441.5" x2="589.4" y2="446.5" stroke="#B00000" stroke-width="1.8" /><line x1="1177.7" y1="852.2" x2="1630.3" y2="689.0" stroke="#B00000" stroke-width="1.8" /><line x1="1157.5" y1="836.3" x2="1183.9" y2="857.1" stroke="#B00000" stroke-width="1.8" /><line x1="1285.1" y1="791.3" x2="1312.8" y2="810.3" stroke="#B00000" stroke-width="1.8" /><line x1="1401.7" y1="750.2" x2="1430.5" y2="767.6" stroke="#B00000" stroke-width="1.8" /><line x1="1508.8" y1="712.4" x2="1538.2" y2="728.4" stroke="#B00000" stroke-width="1.8" /><line x1="1607.4" y1="677.7" x2="1637.3" y2="692.4" stroke="#B00000" stroke-width="1.8" />
<polygon points="1069.3,797.9 1053.5,785.1 1052.5,753.9 1068.4,766.5" fill="#8F008F" stroke="#8F008F" stroke-width="0.5" stroke-linejoin="round" /><polygon points="1069.3,797.9 1080.4,794.3 1079.6,762.9 1068.4,766.5" fill="#880088" stroke="#880088" stroke-width="0.5" stroke-linejoin="round" /><polygon points="1068.4,766.5 1079.6,762.9 1063.6,750.5 1052.5,753.9" fill="#C300C3" stroke="#C300C3" stroke-width="0.5" stroke-linejoin="round" /><polygon points="1003.2,744.2 989.2,732.7 987.7,702.9 1001.9,714.1" fill="#8F008F" stroke="#8F008F" stroke-width="0.5" stroke-linejoin="round" /><polygon points="1003.2,744.2 1014.0,740.9 1012.7,710.9 1001.9,714.1" fill="#880088" stroke="#880088" stroke-width="0.5" stroke-linejoin="round" /><polygon points="1001.9,714.1 1012.7,710.9 998.5,699.8 987.7,702.9" fill="#C300C3" stroke="#C300C3" stroke-width="0.5" stroke-linejoin="round" /><polygon points="944.1,696.1 931.5,685.8 929.7,657.2 942.4,667.2" fill="#8F008F" stroke="#8F008F" stroke-width="0.5" stroke-linejoin="round" /><polygon points="944.1,696.1 954.5,693.2 952.9,664.4 942.4,667.2" fill="#880088" stroke="#880088" stroke-width="0.5" stroke-linejoin="round" /><polygon points="942.4,667.2 952.9,664.4 940.1,654.4 929.7,657.2" fill="#C300C3" stroke="#C300C3" stroke-width="0.5" stroke-linejoin="round" /><polygon points="890.9,652.8 879.4,643.5 877.4,616.0 888.9,625.0" fill="#8F008F" stroke="#8F008F" stroke-width="0.5" stroke-linejoin="round" /><polygon points="890.9,652.8 900.9,650.1 899.0,622.5 888.9,625.0" fill="#880088" stroke="#880088" stroke-width="0.5" stroke-linejoin="round" /><polygon points="888.9,625.0 899.0,622.5 887.4,613.5 877.4,616.0" fill="#C300C3" stroke="#C300C3" stroke-width="0.5" stroke-linejoin="round" /><polygon points="842.7,613.5 832.3,605.1 830.1,578.7 840.5,586.9" fill="#8F008F" stroke="#8F008F" stroke-width="0.5" stroke-linejoin="round" /><polygon points="842.7,613.5 852.4,611.2 850.3,584.6 840.5,586.9" fill="#880088" stroke="#880088" stroke-width="0.5" stroke-linejoin="round" /><polygon points="840.5,586.9 850.3,584.6 839.8,576.4 830.1,578.7" fill="#C300C3" stroke="#C300C3" stroke-width="0.5" stroke-linejoin="round" /><polygon points="798.8,577.9 789.4,570.2 787.0,544.7 796.5,552.2" fill="#8F008F" stroke="#8F008F" stroke-width="0.5" stroke-linejoin="round" /><polygon points="798.8,577.9 808.2,575.7 805.9,550.1 796.5,552.2" fill="#880088" stroke="#880088" stroke-width="0.5" stroke-linejoin="round" /><polygon points="796.5,552.2 805.9,550.1 796.4,542.6 787.0,544.7" fill="#C300C3" stroke="#C300C3" stroke-width="0.5" stroke-linejoin="round" /><polygon points="758.8,545.3 750.1,538.2 747.6,513.7 756.3,520.6" fill="#8F008F" stroke="#8F008F" stroke-width="0.5" stroke-linejoin="round" /><polygon points="758.8,545.3 767.9,543.3 765.5,518.6 756.3,520.6" fill="#880088" stroke="#880088" stroke-width="0.5" stroke-linejoin="round" /><polygon points="756.3,520.6 765.5,518.6 756.7,511.8 747.6,513.7" fill="#C300C3" stroke="#C300C3" stroke-width="0.5" stroke-linejoin="round" /><polygon points="722.1,515.4 714.1,508.9 711.5,485.2 719.5,491.5" fill="#8F008F" stroke="#8F008F" stroke-width="0.5" stroke-linejoin="round" /><polygon points="722.1,515.4 730.9,513.6 728.4,489.8 719.5,491.5" fill="#880088" stroke="#880088" stroke-width="0.5" stroke-linejoin="round" /><polygon points="719.5,491.5 728.4,489.8 720.3,483.5 711.5,485.2" fill="#C300C3" stroke="#C300C3" stroke-width="0.5" stroke-linejoin="round" /><polygon points="688.3,487.9 680.9,481.9 678.2,459.0 685.6,464.8" fill="#8F008F" stroke="#8F008F" stroke-width="0.5" stroke-linejoin="round" /><polygon points="688.3,487.9 696.8,486.2 694.2,463.2 685.6,464.8" fill="#880088" stroke="#880088" stroke-width="0.5" stroke-linejoin="round" /><polygon points="685.6,464.8 694.2,463.2 686.8,457.4 678.2,459.0" fill="#C300C3" stroke="#C300C3" stroke-width="0.5" stroke-linejoin="round" /><polygon points="657.1,462.5 650.3,457.0 647.5,434.8 654.3,440.2" fill="#8F008F" stroke="#8F008F" stroke-width="0.5" stroke-linejoin="round" /><polygon points="657.1,462.5 665.4,461.0 662.7,438.7 654.3,440.2" fill="#880088" stroke="#880088" stroke-width="0.5" stroke-linejoin="round" /><polygon points="654.3,440.2 662.7,438.7 655.8,433.4 647.5,434.8" fill="#C300C3" stroke="#C300C3" stroke-width="0.5" stroke-linejoin="round" /><polygon points="1238.3,808.3 1232.1,803.8 1232.6,772.3 1238.8,776.6" fill="#8F008F" stroke="#8F008F" stroke-width="0.5" stroke-linejoin="round" /><polygon points="1238.3,808.3 1261.5,800.1 1262.2,768.6 1238.8,776.6" fill="#880088" stroke="#880088" stroke-width="0.5" stroke-linejoin="round" /><polygon points="1238.8,776.6 1262.2,768.6 1255.9,764.3 1232.6,772.3" fill="#C300C3" stroke="#C300C3" stroke-width="0.5" stroke-linejoin="round" /><polygon points="1354.3,767.4 1347.9,763.3 1349.3,732.7 1355.7,736.7" fill="#8F008F" stroke="#8F008F" stroke-width="0.5" stroke-linejoin="round" /><polygon points="1354.3,767.4 1375.6,759.8 1377.2,729.4 1355.7,736.7" fill="#880088" stroke="#880088" stroke-width="0.5" stroke-linejoin="round" /><polygon points="1355.7,736.7 1377.2,729.4 1370.7,725.5 1349.3,732.7" fill="#C300C3" stroke="#C300C3" stroke-width="0.5" stroke-linejoin="round" /><polygon points="1461.0,729.7 1454.4,726.0 1456.5,696.4 1463.1,700.0" fill="#8F008F" stroke="#8F008F" stroke-width="0.5" stroke-linejoin="round" /><polygon points="1461.0,729.7 1480.6,722.8 1482.9,693.3 1463.1,700.0" fill="#880088" stroke="#880088" stroke-width="0.5" stroke-linejoin="round" /><polygon points="1463.1,700.0 1482.9,693.3 1476.2,689.7 1456.5,696.4" fill="#C300C3" stroke="#C300C3" stroke-width="0.5" stroke-linejoin="round" /><polygon points="1559.4,695.0 1552.7,691.6 1555.4,662.9 1562.2,666.2" fill="#8F008F" stroke="#8F008F" stroke-width="0.5" stroke-linejoin="round" /><polygon points="1559.4,695.0 1577.5,688.6 1580.4,660.0 1562.2,666.2" fill="#880088" stroke="#880088" stroke-width="0.5" stroke-linejoin="round" /><polygon points="1562.2,666.2 1580.4,660.0 1573.6,656.7 1555.4,662.9" fill="#C300C3" stroke="#C300C3" stroke-width="0.5" stroke-linejoin="round" />
<polygon points="1060.1,759.9 1050.9,752.7 1046.5,613.9 1056.0,620.3" fill="#5B9958" stroke="#5B9958" stroke-width="0.5" stroke-linejoin="round" /><polygon points="1060.1,759.9 1068.2,757.4 1064.4,618.1 1056.0,620.3" fill="#4F8951" stroke="#4F8951" stroke-width="0.5" stroke-linejoin="round" /><polygon points="1056.0,620.3 1064.4,618.1 1054.9,611.7 1046.5,613.9" fill="#6FBF6F" stroke="#6FBF6F" stroke-width="0.5" stroke-linejoin="round" /><polygon points="994.5,708.2 986.3,701.8 980.0,569.2 988.4,574.9" fill="#5B9958" stroke="#5B9958" stroke-width="0.5" stroke-linejoin="round" /><polygon points="994.5,708.2 1002.4,706.0 996.5,572.9 988.4,574.9" fill="#4F8951" stroke="#4F8951" stroke-width="0.5" stroke-linejoin="round" /><polygon points="988.4,574.9 996.5,572.9 988.1,567.2 980.0,569.2" fill="#6FBF6F" stroke="#6FBF6F" stroke-width="0.5" stroke-linejoin="round" /><polygon points="935.8,662.0 928.4,656.2 920.6,529.3 928.2,534.3" fill="#5B9958" stroke="#5B9958" stroke-width="0.5" stroke-linejoin="round" /><polygon points="935.8,662.0 943.4,659.9 936.0,532.6 928.2,534.3" fill="#4F8951" stroke="#4F8951" stroke-width="0.5" stroke-linejoin="round" /><polygon points="928.2,534.3 936.0,532.6 928.4,527.5 920.6,529.3" fill="#6FBF6F" stroke="#6FBF6F" stroke-width="0.5" stroke-linejoin="round" /><polygon points="882.9,620.3 876.3,615.1 867.3,493.4 874.1,498.0" fill="#5B9958" stroke="#5B9958" stroke-width="0.5" stroke-linejoin="round" /><polygon points="882.9,620.3 890.2,618.5 881.7,496.4 874.1,498.0" fill="#4F8951" stroke="#4F8951" stroke-width="0.5" stroke-linejoin="round" /><polygon points="874.1,498.0 881.7,496.4 874.8,491.8 867.3,493.4" fill="#6FBF6F" stroke="#6FBF6F" stroke-width="0.5" stroke-linejoin="round" /><polygon points="835.1,582.6 829.0,577.8 819.2,461.0 825.3,465.2" fill="#5B9958" stroke="#5B9958" stroke-width="0.5" stroke-linejoin="round" /><polygon points="835.1,582.6 842.1,580.9 832.6,463.7 825.3,465.2" fill="#4F8951" stroke="#4F8951" stroke-width="0.5" stroke-linejoin="round" /><polygon points="825.3,465.2 832.6,463.7 826.4,459.6 819.2,461.0" fill="#6FBF6F" stroke="#6FBF6F" stroke-width="0.5" stroke-linejoin="round" /><polygon points="791.5,548.3 786.0,544.0 775.5,431.6 781.0,435.4" fill="#5B9958" stroke="#5B9958" stroke-width="0.5" stroke-linejoin="round" /><polygon points="791.5,548.3 798.4,546.8 788.1,434.1 781.0,435.4" fill="#4F8951" stroke="#4F8951" stroke-width="0.5" stroke-linejoin="round" /><polygon points="781.0,435.4 788.1,434.1 782.5,430.3 775.5,431.6" fill="#6FBF6F" stroke="#6FBF6F" stroke-width="0.5" stroke-linejoin="round" /><polygon points="751.8,517.0 746.7,513.0 735.6,404.8 740.7,408.3" fill="#5B9958" stroke="#5B9958" stroke-width="0.5" stroke-linejoin="round" /><polygon points="751.8,517.0 758.4,515.6 747.6,407.1 740.7,408.3" fill="#4F8951" stroke="#4F8951" stroke-width="0.5" stroke-linejoin="round" /><polygon points="740.7,408.3 747.6,407.1 742.4,403.6 735.6,404.8" fill="#6FBF6F" stroke="#6FBF6F" stroke-width="0.5" stroke-linejoin="round" /><polygon points="715.3,488.3 710.7,484.6 699.1,380.3 703.8,383.5" fill="#5B9958" stroke="#5B9958" stroke-width="0.5" stroke-linejoin="round" /><polygon points="715.3,488.3 721.8,487.0 710.4,382.4 703.8,383.5" fill="#4F8951" stroke="#4F8951" stroke-width="0.5" stroke-linejoin="round" /><polygon points="703.8,383.5 710.4,382.4 705.7,379.2 699.1,380.3" fill="#6FBF6F" stroke="#6FBF6F" stroke-width="0.5" stroke-linejoin="round" /><polygon points="681.8,461.8 677.5,458.4 665.6,357.8 669.9,360.7" fill="#5B9958" stroke="#5B9958" stroke-width="0.5" stroke-linejoin="round" /><polygon points="681.8,461.8 688.0,460.6 676.4,359.7 669.9,360.7" fill="#4F8951" stroke="#4F8951" stroke-width="0.5" stroke-linejoin="round" /><polygon points="669.9,360.7 676.4,359.7 672.0,356.8 665.6,357.8" fill="#6FBF6F" stroke="#6FBF6F" stroke-width="0.5" stroke-linejoin="round" /><polygon points="650.8,437.4 646.8,434.3 634.7,337.0 638.7,339.7" fill="#5B9958" stroke="#5B9958" stroke-width="0.5" stroke-linejoin="round" /><polygon points="650.8,437.4 656.9,436.3 644.9,338.7 638.7,339.7" fill="#4F8951" stroke="#4F8951" stroke-width="0.5" stroke-linejoin="round" /><polygon points="638.7,339.7 644.9,338.7 640.9,336.1 634.7,337.0" fill="#6FBF6F" stroke="#6FBF6F" stroke-width="0.5" stroke-linejoin="round" /><polygon points="1247.9,773.5 1242.3,769.6 1244.7,628.9 1250.5,632.3" fill="#5B9958" stroke="#5B9958" stroke-width="0.5" stroke-linejoin="round" /><polygon points="1247.9,773.5 1262.7,768.4 1265.8,627.8 1250.5,632.3" fill="#4F8951" stroke="#4F8951" stroke-width="0.5" stroke-linejoin="round" /><polygon points="1250.5,632.3 1265.8,627.8 1259.9,624.5 1244.7,628.9" fill="#6FBF6F" stroke="#6FBF6F" stroke-width="0.5" stroke-linejoin="round" /><polygon points="1364.1,733.8 1358.2,730.3 1364.5,594.3 1370.5,597.5" fill="#5B9958" stroke="#5B9958" stroke-width="0.5" stroke-linejoin="round" /><polygon points="1364.1,733.8 1377.7,729.2 1384.6,593.4 1370.5,597.5" fill="#4F8951" stroke="#4F8951" stroke-width="0.5" stroke-linejoin="round" /><polygon points="1370.5,597.5 1384.6,593.4 1378.5,590.3 1364.5,594.3" fill="#6FBF6F" stroke="#6FBF6F" stroke-width="0.5" stroke-linejoin="round" /><polygon points="1470.8,697.4 1464.8,694.1 1474.3,562.6 1480.6,565.5" fill="#5B9958" stroke="#5B9958" stroke-width="0.5" stroke-linejoin="round" /><polygon points="1470.8,697.4 1483.3,693.1 1493.4,561.8 1480.6,565.5" fill="#4F8951" stroke="#4F8951" stroke-width="0.5" stroke-linejoin="round" /><polygon points="1480.6,565.5 1493.4,561.8 1487.2,558.9 1474.3,562.6" fill="#6FBF6F" stroke="#6FBF6F" stroke-width="0.5" stroke-linejoin="round" /><polygon points="1569.3,663.8 1563.2,660.8 1575.4,533.5 1581.7,536.2" fill="#5B9958" stroke="#5B9958" stroke-width="0.5" stroke-linejoin="round" /><polygon points="1569.3,663.8 1580.8,659.9 1593.6,532.7 1581.7,536.2" fill="#4F8951" stroke="#4F8951" stroke-width="0.5" stroke-linejoin="round" /><polygon points="1581.7,536.2 1593.6,532.7 1587.2,530.1 1575.4,533.5" fill="#6FBF6F" stroke="#6FBF6F" stroke-width="0.5" stroke-linejoin="round" />
<polygon points="1128.8,828.4 650.0,445.7 648.9,436.4 1128.7,814.7" fill="#9C9C9C" stroke="#9C9C9C" stroke-width="0.5" stroke-linejoin="round" /><polygon points="1129.3,826.2 1574.0,672.5 1575.1,661.8 1129.2,814.0" fill="#9C9C9C" stroke="#9C9C9C" stroke-width="0.5" stroke-linejoin="round" />
<polygon points="1128.7,814.7 648.9,436.4 637.8,346.9 1127.0,681.0" fill="#DFDFDF" stroke="#DFDFDF" stroke-width="0.5" stroke-linejoin="round" /><line x1="1127.1" y1="813.5" x2="1125.4" y2="679.9" stroke="#EDEDED" stroke-width="2.98"/><line x1="1124.0" y1="811.0" x2="1122.2" y2="677.7" stroke="#D2D6D8" stroke-width="2.97"/><line x1="1117.9" y1="806.2" x2="1115.9" y2="673.4" stroke="#DCD8D8" stroke-width="2.94"/><line x1="1114.9" y1="803.8" x2="1112.8" y2="671.2" stroke="#EDEDED" stroke-width="2.92"/><line x1="1111.8" y1="801.4" x2="1109.6" y2="669.1" stroke="#D2D6D8" stroke-width="2.91"/><line x1="1105.8" y1="796.7" x2="1103.4" y2="664.8" stroke="#DCD8D8" stroke-width="2.88"/><line x1="1102.8" y1="794.3" x2="1100.3" y2="662.7" stroke="#EDEDED" stroke-width="2.87"/><line x1="1099.8" y1="792.0" x2="1097.3" y2="660.6" stroke="#D2D6D8" stroke-width="2.85"/><line x1="1093.9" y1="787.3" x2="1091.2" y2="656.5" stroke="#DCD8D8" stroke-width="2.82"/><line x1="1091.0" y1="785.0" x2="1088.2" y2="654.4" stroke="#EDEDED" stroke-width="2.81"/><line x1="1088.1" y1="782.7" x2="1085.1" y2="652.4" stroke="#D2D6D8" stroke-width="2.80"/><line x1="1082.3" y1="778.1" x2="1079.2" y2="648.3" stroke="#DCD8D8" stroke-width="2.77"/><line x1="1079.4" y1="775.9" x2="1076.2" y2="646.3" stroke="#EDEDED" stroke-width="2.76"/><line x1="1076.6" y1="773.6" x2="1073.3" y2="644.2" stroke="#D2D6D8" stroke-width="2.74"/><line x1="1070.9" y1="769.1" x2="1067.4" y2="640.2" stroke="#DCD8D8" stroke-width="2.72"/><line x1="1068.1" y1="766.9" x2="1064.5" y2="638.3" stroke="#EDEDED" stroke-width="2.70"/><line x1="1065.3" y1="764.7" x2="1061.6" y2="636.3" stroke="#D2D6D8" stroke-width="2.69"/><line x1="1059.7" y1="760.3" x2="1055.9" y2="632.4" stroke="#DCD8D8" stroke-width="2.67"/><line x1="1056.9" y1="758.1" x2="1053.0" y2="630.4" stroke="#EDEDED" stroke-width="2.65"/><line x1="1054.2" y1="755.9" x2="1050.2" y2="628.5" stroke="#D2D6D8" stroke-width="2.64"/><line x1="1048.7" y1="751.6" x2="1044.6" y2="624.6" stroke="#DCD8D8" stroke-width="2.62"/><line x1="1046.0" y1="749.5" x2="1041.8" y2="622.7" stroke="#EDEDED" stroke-width="2.60"/><line x1="1043.3" y1="747.3" x2="1039.0" y2="620.8" stroke="#D2D6D8" stroke-width="2.59"/><line x1="1037.9" y1="743.1" x2="1033.5" y2="617.1" stroke="#DCD8D8" stroke-width="2.57"/><line x1="1035.2" y1="741.0" x2="1030.7" y2="615.2" stroke="#EDEDED" stroke-width="2.56"/><line x1="1032.6" y1="738.9" x2="1028.0" y2="613.3" stroke="#D2D6D8" stroke-width="2.54"/><line x1="1027.3" y1="734.7" x2="1022.6" y2="609.6" stroke="#DCD8D8" stroke-width="2.52"/><line x1="1024.7" y1="732.7" x2="1019.9" y2="607.8" stroke="#EDEDED" stroke-width="2.51"/><line x1="1022.1" y1="730.6" x2="1017.2" y2="606.0" stroke="#D2D6D8" stroke-width="2.50"/><line x1="1016.9" y1="726.5" x2="1011.9" y2="602.3" stroke="#DCD8D8" stroke-width="2.47"/><line x1="1014.3" y1="724.5" x2="1009.2" y2="600.5" stroke="#EDEDED" stroke-width="2.46"/><line x1="1011.7" y1="722.5" x2="1006.6" y2="598.7" stroke="#D2D6D8" stroke-width="2.45"/><line x1="1006.7" y1="718.5" x2="1001.4" y2="595.2" stroke="#DCD8D8" stroke-width="2.43"/><line x1="1004.1" y1="716.5" x2="998.8" y2="593.4" stroke="#EDEDED" stroke-width="2.42"/><line x1="1001.6" y1="714.5" x2="996.2" y2="591.6" stroke="#D2D6D8" stroke-width="2.41"/><line x1="996.6" y1="710.6" x2="991.1" y2="588.1" stroke="#DCD8D8" stroke-width="2.39"/><line x1="994.1" y1="708.6" x2="988.5" y2="586.4" stroke="#EDEDED" stroke-width="2.38"/><line x1="991.7" y1="706.7" x2="986.0" y2="584.7" stroke="#D2D6D8" stroke-width="2.37"/><line x1="986.8" y1="702.8" x2="981.0" y2="581.2" stroke="#DCD8D8" stroke-width="2.34"/><line x1="984.3" y1="700.9" x2="978.5" y2="579.5" stroke="#EDEDED" stroke-width="2.33"/><line x1="981.9" y1="699.0" x2="976.0" y2="577.8" stroke="#D2D6D8" stroke-width="2.32"/><line x1="977.1" y1="695.1" x2="971.0" y2="574.4" stroke="#DCD8D8" stroke-width="2.30"/><line x1="974.7" y1="693.3" x2="968.6" y2="572.8" stroke="#EDEDED" stroke-width="2.29"/><line x1="972.3" y1="691.4" x2="966.1" y2="571.1" stroke="#D2D6D8" stroke-width="2.28"/><line x1="967.5" y1="687.6" x2="961.3" y2="567.8" stroke="#DCD8D8" stroke-width="2.26"/><line x1="965.2" y1="685.8" x2="958.9" y2="566.1" stroke="#EDEDED" stroke-width="2.25"/><line x1="962.8" y1="683.9" x2="956.5" y2="564.5" stroke="#D2D6D8" stroke-width="2.24"/><line x1="958.2" y1="680.3" x2="951.7" y2="561.2" stroke="#DCD8D8" stroke-width="2.22"/><line x1="955.9" y1="678.4" x2="949.3" y2="559.6" stroke="#EDEDED" stroke-width="2.21"/><line x1="953.6" y1="676.6" x2="947.0" y2="558.0" stroke="#D2D6D8" stroke-width="2.20"/><line x1="949.0" y1="673.0" x2="942.3" y2="554.8" stroke="#DCD8D8" stroke-width="2.19"/><line x1="946.7" y1="671.2" x2="940.0" y2="553.2" stroke="#EDEDED" stroke-width="2.18"/><line x1="944.4" y1="669.4" x2="937.6" y2="551.6" stroke="#D2D6D8" stroke-width="2.17"/><line x1="939.9" y1="665.9" x2="933.0" y2="548.5" stroke="#DCD8D8" stroke-width="2.15"/><line x1="937.7" y1="664.1" x2="930.8" y2="546.9" stroke="#EDEDED" stroke-width="2.14"/><line x1="935.5" y1="662.3" x2="928.5" y2="545.4" stroke="#D2D6D8" stroke-width="2.13"/><line x1="931.0" y1="658.9" x2="923.9" y2="542.3" stroke="#DCD8D8" stroke-width="2.11"/><line x1="928.8" y1="657.1" x2="921.7" y2="540.7" stroke="#EDEDED" stroke-width="2.10"/><line x1="926.6" y1="655.4" x2="919.5" y2="539.2" stroke="#D2D6D8" stroke-width="2.09"/><line x1="922.3" y1="652.0" x2="915.0" y2="536.2" stroke="#DCD8D8" stroke-width="2.08"/><line x1="920.1" y1="650.2" x2="912.8" y2="534.7" stroke="#EDEDED" stroke-width="2.07"/><line x1="918.0" y1="648.5" x2="910.6" y2="533.2" stroke="#D2D6D8" stroke-width="2.06"/><line x1="913.7" y1="645.2" x2="906.2" y2="530.2" stroke="#DCD8D8" stroke-width="2.04"/><line x1="911.5" y1="643.5" x2="904.0" y2="528.7" stroke="#EDEDED" stroke-width="2.03"/><line x1="909.4" y1="641.8" x2="901.9" y2="527.2" stroke="#D2D6D8" stroke-width="2.03"/><line x1="905.2" y1="638.5" x2="897.6" y2="524.3" stroke="#DCD8D8" stroke-width="2.01"/><line x1="903.1" y1="636.8" x2="895.4" y2="522.8" stroke="#EDEDED" stroke-width="2.00"/><line x1="901.0" y1="635.2" x2="893.3" y2="521.4" stroke="#D2D6D8" stroke-width="1.99"/><line x1="896.9" y1="631.9" x2="889.1" y2="518.5" stroke="#DCD8D8" stroke-width="1.98"/><line x1="894.8" y1="630.3" x2="887.0" y2="517.0" stroke="#EDEDED" stroke-width="1.97"/><line x1="892.8" y1="628.7" x2="884.9" y2="515.6" stroke="#D2D6D8" stroke-width="1.96"/><line x1="888.7" y1="625.5" x2="880.7" y2="512.8" stroke="#DCD8D8" stroke-width="1.94"/><line x1="886.7" y1="623.9" x2="878.7" y2="511.4" stroke="#EDEDED" stroke-width="1.94"/><line x1="884.6" y1="622.3" x2="876.6" y2="509.9" stroke="#D2D6D8" stroke-width="1.93"/><line x1="880.6" y1="619.1" x2="872.5" y2="507.1" stroke="#DCD8D8" stroke-width="1.91"/><line x1="878.6" y1="617.5" x2="870.5" y2="505.8" stroke="#EDEDED" stroke-width="1.91"/><line x1="876.6" y1="616.0" x2="868.4" y2="504.4" stroke="#D2D6D8" stroke-width="1.90"/><line x1="872.7" y1="612.8" x2="864.4" y2="501.6" stroke="#DCD8D8" stroke-width="1.88"/><line x1="870.7" y1="611.3" x2="862.4" y2="500.3" stroke="#EDEDED" stroke-width="1.88"/><line x1="868.8" y1="609.8" x2="860.4" y2="498.9" stroke="#D2D6D8" stroke-width="1.87"/><line x1="864.9" y1="606.7" x2="856.5" y2="496.2" stroke="#DCD8D8" stroke-width="1.85"/><line x1="862.9" y1="605.2" x2="854.5" y2="494.8" stroke="#EDEDED" stroke-width="1.85"/><line x1="861.0" y1="603.6" x2="852.5" y2="493.5" stroke="#D2D6D8" stroke-width="1.84"/><line x1="857.2" y1="600.6" x2="848.6" y2="490.8" stroke="#DCD8D8" stroke-width="1.82"/><line x1="855.3" y1="599.1" x2="846.7" y2="489.5" stroke="#EDEDED" stroke-width="1.82"/><line x1="853.4" y1="597.6" x2="844.8" y2="488.2" stroke="#D2D6D8" stroke-width="1.81"/><line x1="849.6" y1="594.6" x2="840.9" y2="485.6" stroke="#DCD8D8" stroke-width="1.80"/><line x1="847.7" y1="593.2" x2="839.0" y2="484.3" stroke="#EDEDED" stroke-width="1.79"/><line x1="845.9" y1="591.7" x2="837.1" y2="483.0" stroke="#D2D6D8" stroke-width="1.78"/><line x1="842.1" y1="588.8" x2="833.3" y2="480.4" stroke="#DCD8D8" stroke-width="1.77"/><line x1="840.3" y1="587.3" x2="831.4" y2="479.1" stroke="#EDEDED" stroke-width="1.76"/><line x1="838.5" y1="585.9" x2="829.6" y2="477.8" stroke="#D2D6D8" stroke-width="1.76"/><line x1="834.8" y1="583.0" x2="825.9" y2="475.3" stroke="#DCD8D8" stroke-width="1.74"/><line x1="833.0" y1="581.5" x2="824.0" y2="474.0" stroke="#EDEDED" stroke-width="1.73"/><line x1="831.2" y1="580.1" x2="822.2" y2="472.8" stroke="#D2D6D8" stroke-width="1.73"/><line x1="827.6" y1="577.3" x2="818.5" y2="470.3" stroke="#DCD8D8" stroke-width="1.72"/><line x1="825.8" y1="575.9" x2="816.7" y2="469.0" stroke="#EDEDED" stroke-width="1.71"/><line x1="824.0" y1="574.5" x2="814.9" y2="467.8" stroke="#D2D6D8" stroke-width="1.70"/><line x1="820.4" y1="571.7" x2="811.3" y2="465.3" stroke="#DCD8D8" stroke-width="1.69"/><line x1="818.7" y1="570.3" x2="809.5" y2="464.1" stroke="#EDEDED" stroke-width="1.68"/><line x1="816.9" y1="568.9" x2="807.7" y2="462.9" stroke="#D2D6D8" stroke-width="1.68"/><line x1="813.4" y1="566.1" x2="804.1" y2="460.5" stroke="#DCD8D8" stroke-width="1.66"/><line x1="811.7" y1="564.7" x2="802.4" y2="459.3" stroke="#EDEDED" stroke-width="1.66"/><line x1="810.0" y1="563.4" x2="800.6" y2="458.1" stroke="#D2D6D8" stroke-width="1.65"/><line x1="806.5" y1="560.7" x2="797.1" y2="455.7" stroke="#DCD8D8" stroke-width="1.64"/><line x1="804.8" y1="559.3" x2="795.4" y2="454.5" stroke="#EDEDED" stroke-width="1.63"/><line x1="803.1" y1="558.0" x2="793.6" y2="453.3" stroke="#D2D6D8" stroke-width="1.63"/><line x1="799.7" y1="555.3" x2="790.2" y2="450.9" stroke="#DCD8D8" stroke-width="1.62"/><line x1="798.0" y1="554.0" x2="788.5" y2="449.8" stroke="#EDEDED" stroke-width="1.61"/><line x1="796.3" y1="552.6" x2="786.8" y2="448.6" stroke="#D2D6D8" stroke-width="1.60"/><line x1="793.0" y1="550.0" x2="783.4" y2="446.3" stroke="#DCD8D8" stroke-width="1.59"/><line x1="791.3" y1="548.7" x2="781.7" y2="445.1" stroke="#EDEDED" stroke-width="1.59"/><line x1="789.6" y1="547.4" x2="780.0" y2="444.0" stroke="#D2D6D8" stroke-width="1.58"/><line x1="786.4" y1="544.8" x2="776.7" y2="441.7" stroke="#DCD8D8" stroke-width="1.57"/><line x1="784.7" y1="543.5" x2="775.0" y2="440.6" stroke="#EDEDED" stroke-width="1.56"/><line x1="783.1" y1="542.2" x2="773.3" y2="439.4" stroke="#D2D6D8" stroke-width="1.56"/><line x1="779.8" y1="539.6" x2="770.0" y2="437.2" stroke="#DCD8D8" stroke-width="1.55"/><line x1="778.2" y1="538.3" x2="768.4" y2="436.1" stroke="#EDEDED" stroke-width="1.54"/><line x1="776.6" y1="537.1" x2="766.8" y2="435.0" stroke="#D2D6D8" stroke-width="1.53"/><line x1="773.4" y1="534.6" x2="763.5" y2="432.7" stroke="#DCD8D8" stroke-width="1.52"/><line x1="771.8" y1="533.3" x2="761.9" y2="431.6" stroke="#EDEDED" stroke-width="1.52"/><line x1="770.2" y1="532.0" x2="760.3" y2="430.5" stroke="#D2D6D8" stroke-width="1.51"/><line x1="767.0" y1="529.5" x2="757.1" y2="428.4" stroke="#DCD8D8" stroke-width="1.50"/><line x1="765.5" y1="528.3" x2="755.5" y2="427.3" stroke="#EDEDED" stroke-width="1.50"/><line x1="763.9" y1="527.1" x2="753.9" y2="426.2" stroke="#D2D6D8" stroke-width="1.49"/><line x1="760.8" y1="524.6" x2="750.8" y2="424.0" stroke="#DCD8D8" stroke-width="1.48"/><line x1="759.2" y1="523.4" x2="749.2" y2="423.0" stroke="#EDEDED" stroke-width="1.48"/><line x1="757.7" y1="522.2" x2="747.6" y2="421.9" stroke="#D2D6D8" stroke-width="1.47"/><line x1="754.6" y1="519.8" x2="744.5" y2="419.8" stroke="#DCD8D8" stroke-width="1.46"/><line x1="753.1" y1="518.6" x2="743.0" y2="418.7" stroke="#EDEDED" stroke-width="1.46"/><line x1="751.6" y1="517.4" x2="741.4" y2="417.7" stroke="#D2D6D8" stroke-width="1.45"/><line x1="748.5" y1="515.0" x2="738.4" y2="415.6" stroke="#DCD8D8" stroke-width="1.44"/><line x1="747.0" y1="513.8" x2="736.8" y2="414.5" stroke="#EDEDED" stroke-width="1.44"/><line x1="745.5" y1="512.6" x2="735.3" y2="413.5" stroke="#D2D6D8" stroke-width="1.43"/><line x1="742.5" y1="510.2" x2="732.3" y2="411.4" stroke="#DCD8D8" stroke-width="1.42"/><line x1="741.1" y1="509.1" x2="730.8" y2="410.4" stroke="#EDEDED" stroke-width="1.42"/><line x1="739.6" y1="507.9" x2="729.3" y2="409.4" stroke="#D2D6D8" stroke-width="1.41"/><line x1="736.6" y1="505.6" x2="726.3" y2="407.3" stroke="#DCD8D8" stroke-width="1.40"/><line x1="735.2" y1="504.4" x2="724.8" y2="406.3" stroke="#EDEDED" stroke-width="1.40"/><line x1="733.7" y1="503.3" x2="723.4" y2="405.3" stroke="#D2D6D8" stroke-width="1.39"/><line x1="730.8" y1="501.0" x2="720.4" y2="403.3" stroke="#DCD8D8" stroke-width="1.38"/><line x1="729.3" y1="499.8" x2="719.0" y2="402.3" stroke="#EDEDED" stroke-width="1.38"/><line x1="727.9" y1="498.7" x2="717.5" y2="401.3" stroke="#D2D6D8" stroke-width="1.37"/><line x1="725.0" y1="496.4" x2="714.6" y2="399.3" stroke="#DCD8D8" stroke-width="1.36"/><line x1="723.6" y1="495.3" x2="713.2" y2="398.3" stroke="#EDEDED" stroke-width="1.36"/><line x1="722.2" y1="494.2" x2="711.7" y2="397.4" stroke="#D2D6D8" stroke-width="1.35"/><line x1="719.4" y1="491.9" x2="708.9" y2="395.4" stroke="#DCD8D8" stroke-width="1.34"/><line x1="717.9" y1="490.8" x2="707.4" y2="394.4" stroke="#EDEDED" stroke-width="1.34"/><line x1="716.5" y1="489.7" x2="706.0" y2="393.5" stroke="#D2D6D8" stroke-width="1.34"/><line x1="713.8" y1="487.5" x2="703.2" y2="391.5" stroke="#DCD8D8" stroke-width="1.33"/><line x1="712.4" y1="486.4" x2="701.8" y2="390.6" stroke="#EDEDED" stroke-width="1.32"/><line x1="711.0" y1="485.3" x2="700.4" y2="389.6" stroke="#D2D6D8" stroke-width="1.32"/><line x1="708.2" y1="483.2" x2="697.6" y2="387.7" stroke="#DCD8D8" stroke-width="1.31"/><line x1="706.8" y1="482.1" x2="696.2" y2="386.8" stroke="#EDEDED" stroke-width="1.30"/><line x1="705.5" y1="481.0" x2="694.8" y2="385.8" stroke="#D2D6D8" stroke-width="1.30"/><line x1="702.8" y1="478.9" x2="692.1" y2="384.0" stroke="#DCD8D8" stroke-width="1.29"/><line x1="701.4" y1="477.8" x2="690.7" y2="383.0" stroke="#EDEDED" stroke-width="1.29"/><line x1="700.1" y1="476.7" x2="689.4" y2="382.1" stroke="#D2D6D8" stroke-width="1.28"/><line x1="697.4" y1="474.6" x2="686.7" y2="380.3" stroke="#DCD8D8" stroke-width="1.27"/><line x1="696.0" y1="473.6" x2="685.3" y2="379.3" stroke="#EDEDED" stroke-width="1.27"/><line x1="694.7" y1="472.5" x2="684.0" y2="378.4" stroke="#D2D6D8" stroke-width="1.27"/><line x1="692.1" y1="470.4" x2="681.3" y2="376.6" stroke="#DCD8D8" stroke-width="1.26"/><line x1="690.7" y1="469.4" x2="680.0" y2="375.7" stroke="#EDEDED" stroke-width="1.25"/><line x1="689.4" y1="468.3" x2="678.6" y2="374.8" stroke="#D2D6D8" stroke-width="1.25"/><line x1="686.8" y1="466.3" x2="676.0" y2="373.0" stroke="#DCD8D8" stroke-width="1.24"/><line x1="685.5" y1="465.2" x2="674.7" y2="372.1" stroke="#EDEDED" stroke-width="1.24"/><line x1="684.2" y1="464.2" x2="673.4" y2="371.2" stroke="#D2D6D8" stroke-width="1.23"/><line x1="681.6" y1="462.2" x2="670.8" y2="369.4" stroke="#DCD8D8" stroke-width="1.23"/><line x1="680.3" y1="461.2" x2="669.5" y2="368.5" stroke="#EDEDED" stroke-width="1.22"/><line x1="679.1" y1="460.2" x2="668.2" y2="367.6" stroke="#D2D6D8" stroke-width="1.22"/><line x1="676.5" y1="458.1" x2="665.6" y2="365.9" stroke="#DCD8D8" stroke-width="1.21"/><line x1="675.2" y1="457.1" x2="664.3" y2="365.0" stroke="#EDEDED" stroke-width="1.21"/><line x1="674.0" y1="456.2" x2="663.1" y2="364.1" stroke="#D2D6D8" stroke-width="1.20"/><line x1="671.4" y1="454.2" x2="660.5" y2="362.4" stroke="#DCD8D8" stroke-width="1.20"/><line x1="670.2" y1="453.2" x2="659.3" y2="361.5" stroke="#EDEDED" stroke-width="1.19"/><line x1="668.9" y1="452.2" x2="658.0" y2="360.7" stroke="#D2D6D8" stroke-width="1.19"/><line x1="666.5" y1="450.2" x2="655.5" y2="359.0" stroke="#DCD8D8" stroke-width="1.18"/><line x1="665.2" y1="449.3" x2="654.2" y2="358.1" stroke="#EDEDED" stroke-width="1.18"/><line x1="664.0" y1="448.3" x2="653.0" y2="357.3" stroke="#D2D6D8" stroke-width="1.17"/><line x1="661.5" y1="446.3" x2="650.5" y2="355.6" stroke="#DCD8D8" stroke-width="1.17"/><line x1="660.3" y1="445.4" x2="649.3" y2="354.7" stroke="#EDEDED" stroke-width="1.16"/><line x1="659.1" y1="444.4" x2="648.1" y2="353.9" stroke="#D2D6D8" stroke-width="1.16"/><line x1="656.7" y1="442.5" x2="645.6" y2="352.2" stroke="#DCD8D8" stroke-width="1.15"/><line x1="655.5" y1="441.6" x2="644.4" y2="351.4" stroke="#EDEDED" stroke-width="1.15"/><line x1="654.2" y1="440.6" x2="643.2" y2="350.6" stroke="#D2D6D8" stroke-width="1.14"/><line x1="651.9" y1="438.7" x2="640.8" y2="348.9" stroke="#DCD8D8" stroke-width="1.14"/><line x1="650.7" y1="437.8" x2="639.6" y2="348.1" stroke="#EDEDED" stroke-width="1.13"/><line x1="649.5" y1="436.8" x2="638.4" y2="347.3" stroke="#D2D6D8" stroke-width="1.13"/><polygon points="1129.2,814.0 1575.1,661.8 1586.6,545.7 1127.5,681.0" fill="#E0E0E0" stroke="#E0E0E0" stroke-width="0.5" stroke-linejoin="round" /><line x1="1130.2" y1="813.6" x2="1128.6" y2="680.7" stroke="#EDEDED" stroke-width="2.04"/><line x1="1132.3" y1="812.9" x2="1130.8" y2="680.0" stroke="#D2D6D8" stroke-width="2.03"/><line x1="1136.5" y1="811.5" x2="1135.2" y2="678.8" stroke="#DCD8D8" stroke-width="2.03"/><line x1="1138.6" y1="810.8" x2="1137.3" y2="678.1" stroke="#EDEDED" stroke-width="2.02"/><line x1="1140.7" y1="810.0" x2="1139.5" y2="677.5" stroke="#D2D6D8" stroke-width="2.02"/><line x1="1144.9" y1="808.6" x2="1143.8" y2="676.2" stroke="#DCD8D8" stroke-width="2.01"/><line x1="1147.0" y1="807.9" x2="1146.0" y2="675.6" stroke="#EDEDED" stroke-width="2.01"/><line x1="1149.1" y1="807.2" x2="1148.2" y2="674.9" stroke="#D2D6D8" stroke-width="2.01"/><line x1="1153.2" y1="805.8" x2="1152.5" y2="673.7" stroke="#DCD8D8" stroke-width="2.00"/><line x1="1155.3" y1="805.1" x2="1154.6" y2="673.0" stroke="#EDEDED" stroke-width="2.00"/><line x1="1157.4" y1="804.4" x2="1156.7" y2="672.4" stroke="#D2D6D8" stroke-width="2.00"/><line x1="1161.5" y1="802.9" x2="1161.0" y2="671.1" stroke="#DCD8D8" stroke-width="1.99"/><line x1="1163.6" y1="802.2" x2="1163.2" y2="670.5" stroke="#EDEDED" stroke-width="1.99"/><line x1="1165.6" y1="801.5" x2="1165.3" y2="669.9" stroke="#D2D6D8" stroke-width="1.98"/><line x1="1169.8" y1="800.1" x2="1169.5" y2="668.6" stroke="#DCD8D8" stroke-width="1.98"/><line x1="1171.8" y1="799.4" x2="1171.7" y2="668.0" stroke="#EDEDED" stroke-width="1.98"/><line x1="1173.9" y1="798.7" x2="1173.8" y2="667.4" stroke="#D2D6D8" stroke-width="1.97"/><line x1="1177.9" y1="797.3" x2="1178.0" y2="666.1" stroke="#DCD8D8" stroke-width="1.97"/><line x1="1180.0" y1="796.6" x2="1180.1" y2="665.5" stroke="#EDEDED" stroke-width="1.96"/><line x1="1182.0" y1="795.9" x2="1182.2" y2="664.9" stroke="#D2D6D8" stroke-width="1.96"/><line x1="1186.1" y1="794.6" x2="1186.4" y2="663.6" stroke="#DCD8D8" stroke-width="1.96"/><line x1="1188.1" y1="793.9" x2="1188.5" y2="663.0" stroke="#EDEDED" stroke-width="1.95"/><line x1="1190.1" y1="793.2" x2="1190.6" y2="662.4" stroke="#D2D6D8" stroke-width="1.95"/><line x1="1194.2" y1="791.8" x2="1194.8" y2="661.2" stroke="#DCD8D8" stroke-width="1.94"/><line x1="1196.2" y1="791.1" x2="1196.9" y2="660.6" stroke="#EDEDED" stroke-width="1.94"/><line x1="1198.2" y1="790.4" x2="1198.9" y2="660.0" stroke="#D2D6D8" stroke-width="1.94"/><line x1="1202.2" y1="789.1" x2="1203.1" y2="658.7" stroke="#DCD8D8" stroke-width="1.93"/><line x1="1204.2" y1="788.4" x2="1205.1" y2="658.1" stroke="#EDEDED" stroke-width="1.93"/><line x1="1206.2" y1="787.7" x2="1207.2" y2="657.5" stroke="#D2D6D8" stroke-width="1.93"/><line x1="1210.2" y1="786.3" x2="1211.3" y2="656.3" stroke="#DCD8D8" stroke-width="1.92"/><line x1="1212.2" y1="785.6" x2="1213.4" y2="655.7" stroke="#EDEDED" stroke-width="1.92"/><line x1="1214.2" y1="785.0" x2="1215.5" y2="655.1" stroke="#D2D6D8" stroke-width="1.92"/><line x1="1218.2" y1="783.6" x2="1219.6" y2="653.9" stroke="#DCD8D8" stroke-width="1.91"/><line x1="1220.1" y1="782.9" x2="1221.6" y2="653.3" stroke="#EDEDED" stroke-width="1.91"/><line x1="1222.1" y1="782.3" x2="1223.6" y2="652.7" stroke="#D2D6D8" stroke-width="1.91"/><line x1="1226.1" y1="780.9" x2="1227.7" y2="651.5" stroke="#DCD8D8" stroke-width="1.90"/><line x1="1228.0" y1="780.2" x2="1229.8" y2="650.9" stroke="#EDEDED" stroke-width="1.90"/><line x1="1230.0" y1="779.6" x2="1231.8" y2="650.3" stroke="#D2D6D8" stroke-width="1.89"/><line x1="1233.9" y1="778.2" x2="1235.8" y2="649.1" stroke="#DCD8D8" stroke-width="1.89"/><line x1="1235.9" y1="777.6" x2="1237.9" y2="648.5" stroke="#EDEDED" stroke-width="1.89"/><line x1="1237.9" y1="776.9" x2="1239.9" y2="647.9" stroke="#D2D6D8" stroke-width="1.88"/><line x1="1241.8" y1="775.6" x2="1243.9" y2="646.7" stroke="#DCD8D8" stroke-width="1.88"/><line x1="1243.7" y1="774.9" x2="1245.9" y2="646.1" stroke="#EDEDED" stroke-width="1.88"/><line x1="1245.7" y1="774.2" x2="1247.9" y2="645.5" stroke="#D2D6D8" stroke-width="1.87"/><line x1="1249.5" y1="772.9" x2="1251.9" y2="644.3" stroke="#DCD8D8" stroke-width="1.87"/><line x1="1251.5" y1="772.2" x2="1253.9" y2="643.7" stroke="#EDEDED" stroke-width="1.86"/><line x1="1253.4" y1="771.6" x2="1255.9" y2="643.2" stroke="#D2D6D8" stroke-width="1.86"/><line x1="1257.3" y1="770.3" x2="1259.9" y2="642.0" stroke="#DCD8D8" stroke-width="1.86"/><line x1="1259.2" y1="769.6" x2="1261.9" y2="641.4" stroke="#EDEDED" stroke-width="1.85"/><line x1="1261.1" y1="769.0" x2="1263.9" y2="640.8" stroke="#D2D6D8" stroke-width="1.85"/><line x1="1265.0" y1="767.6" x2="1267.8" y2="639.6" stroke="#DCD8D8" stroke-width="1.85"/><line x1="1266.9" y1="767.0" x2="1269.8" y2="639.1" stroke="#EDEDED" stroke-width="1.84"/><line x1="1268.8" y1="766.3" x2="1271.8" y2="638.5" stroke="#D2D6D8" stroke-width="1.84"/><line x1="1272.6" y1="765.0" x2="1275.7" y2="637.3" stroke="#DCD8D8" stroke-width="1.84"/><line x1="1274.5" y1="764.4" x2="1277.7" y2="636.7" stroke="#EDEDED" stroke-width="1.83"/><line x1="1276.4" y1="763.7" x2="1279.7" y2="636.2" stroke="#D2D6D8" stroke-width="1.83"/><line x1="1280.2" y1="762.4" x2="1283.6" y2="635.0" stroke="#DCD8D8" stroke-width="1.83"/><line x1="1282.1" y1="761.8" x2="1285.5" y2="634.4" stroke="#EDEDED" stroke-width="1.82"/><line x1="1284.0" y1="761.2" x2="1287.5" y2="633.9" stroke="#D2D6D8" stroke-width="1.82"/><line x1="1287.8" y1="759.9" x2="1291.4" y2="632.7" stroke="#DCD8D8" stroke-width="1.82"/><line x1="1289.6" y1="759.2" x2="1293.3" y2="632.1" stroke="#EDEDED" stroke-width="1.81"/><line x1="1291.5" y1="758.6" x2="1295.2" y2="631.6" stroke="#D2D6D8" stroke-width="1.81"/><line x1="1295.3" y1="757.3" x2="1299.1" y2="630.4" stroke="#DCD8D8" stroke-width="1.81"/><line x1="1297.2" y1="756.7" x2="1301.0" y2="629.9" stroke="#EDEDED" stroke-width="1.80"/><line x1="1299.0" y1="756.0" x2="1303.0" y2="629.3" stroke="#D2D6D8" stroke-width="1.80"/><line x1="1302.8" y1="754.7" x2="1306.8" y2="628.2" stroke="#DCD8D8" stroke-width="1.79"/><line x1="1304.6" y1="754.1" x2="1308.7" y2="627.6" stroke="#EDEDED" stroke-width="1.79"/><line x1="1306.5" y1="753.5" x2="1310.7" y2="627.0" stroke="#D2D6D8" stroke-width="1.79"/><line x1="1310.2" y1="752.2" x2="1314.5" y2="625.9" stroke="#DCD8D8" stroke-width="1.78"/><line x1="1312.0" y1="751.6" x2="1316.4" y2="625.3" stroke="#EDEDED" stroke-width="1.78"/><line x1="1313.9" y1="750.9" x2="1318.3" y2="624.8" stroke="#D2D6D8" stroke-width="1.78"/><line x1="1317.6" y1="749.7" x2="1322.1" y2="623.7" stroke="#DCD8D8" stroke-width="1.77"/><line x1="1319.4" y1="749.1" x2="1324.0" y2="623.1" stroke="#EDEDED" stroke-width="1.77"/><line x1="1321.3" y1="748.4" x2="1325.9" y2="622.5" stroke="#D2D6D8" stroke-width="1.77"/><line x1="1324.9" y1="747.2" x2="1329.7" y2="621.4" stroke="#DCD8D8" stroke-width="1.77"/><line x1="1326.8" y1="746.6" x2="1331.6" y2="620.9" stroke="#EDEDED" stroke-width="1.76"/><line x1="1328.6" y1="745.9" x2="1333.4" y2="620.3" stroke="#D2D6D8" stroke-width="1.76"/><line x1="1332.3" y1="744.7" x2="1337.2" y2="619.2" stroke="#DCD8D8" stroke-width="1.76"/><line x1="1334.1" y1="744.1" x2="1339.1" y2="618.6" stroke="#EDEDED" stroke-width="1.75"/><line x1="1335.9" y1="743.4" x2="1341.0" y2="618.1" stroke="#D2D6D8" stroke-width="1.75"/><line x1="1339.5" y1="742.2" x2="1344.7" y2="617.0" stroke="#DCD8D8" stroke-width="1.75"/><line x1="1341.3" y1="741.6" x2="1346.6" y2="616.4" stroke="#EDEDED" stroke-width="1.74"/><line x1="1343.1" y1="741.0" x2="1348.4" y2="615.9" stroke="#D2D6D8" stroke-width="1.74"/><line x1="1346.8" y1="739.7" x2="1352.1" y2="614.8" stroke="#DCD8D8" stroke-width="1.74"/><line x1="1348.6" y1="739.1" x2="1354.0" y2="614.3" stroke="#EDEDED" stroke-width="1.73"/><line x1="1350.4" y1="738.5" x2="1355.9" y2="613.7" stroke="#D2D6D8" stroke-width="1.73"/><line x1="1354.0" y1="737.3" x2="1359.6" y2="612.6" stroke="#DCD8D8" stroke-width="1.73"/><line x1="1355.7" y1="736.7" x2="1361.4" y2="612.1" stroke="#EDEDED" stroke-width="1.72"/><line x1="1357.5" y1="736.1" x2="1363.2" y2="611.5" stroke="#D2D6D8" stroke-width="1.72"/><line x1="1361.1" y1="734.8" x2="1366.9" y2="610.4" stroke="#DCD8D8" stroke-width="1.72"/><line x1="1362.9" y1="734.2" x2="1368.8" y2="609.9" stroke="#EDEDED" stroke-width="1.71"/><line x1="1364.7" y1="733.6" x2="1370.6" y2="609.4" stroke="#D2D6D8" stroke-width="1.71"/><line x1="1368.2" y1="732.4" x2="1374.2" y2="608.3" stroke="#DCD8D8" stroke-width="1.71"/><line x1="1370.0" y1="731.8" x2="1376.1" y2="607.7" stroke="#EDEDED" stroke-width="1.71"/><line x1="1371.8" y1="731.2" x2="1377.9" y2="607.2" stroke="#D2D6D8" stroke-width="1.70"/><line x1="1375.3" y1="730.0" x2="1381.5" y2="606.1" stroke="#DCD8D8" stroke-width="1.70"/><line x1="1377.1" y1="729.4" x2="1383.3" y2="605.6" stroke="#EDEDED" stroke-width="1.70"/><line x1="1378.8" y1="728.8" x2="1385.2" y2="605.1" stroke="#D2D6D8" stroke-width="1.69"/><line x1="1382.3" y1="727.6" x2="1388.8" y2="604.0" stroke="#DCD8D8" stroke-width="1.69"/><line x1="1384.1" y1="727.0" x2="1390.6" y2="603.5" stroke="#EDEDED" stroke-width="1.69"/><line x1="1385.9" y1="726.4" x2="1392.4" y2="602.9" stroke="#D2D6D8" stroke-width="1.68"/><line x1="1389.4" y1="725.2" x2="1396.0" y2="601.9" stroke="#DCD8D8" stroke-width="1.68"/><line x1="1391.1" y1="724.6" x2="1397.8" y2="601.3" stroke="#EDEDED" stroke-width="1.68"/><line x1="1392.8" y1="724.0" x2="1399.6" y2="600.8" stroke="#D2D6D8" stroke-width="1.68"/><line x1="1396.3" y1="722.8" x2="1403.1" y2="599.8" stroke="#DCD8D8" stroke-width="1.67"/><line x1="1398.1" y1="722.2" x2="1404.9" y2="599.2" stroke="#EDEDED" stroke-width="1.67"/><line x1="1399.8" y1="721.6" x2="1406.7" y2="598.7" stroke="#D2D6D8" stroke-width="1.67"/><line x1="1403.2" y1="720.5" x2="1410.3" y2="597.7" stroke="#DCD8D8" stroke-width="1.66"/><line x1="1405.0" y1="719.9" x2="1412.0" y2="597.1" stroke="#EDEDED" stroke-width="1.66"/><line x1="1406.7" y1="719.3" x2="1413.8" y2="596.6" stroke="#D2D6D8" stroke-width="1.66"/><line x1="1410.1" y1="718.1" x2="1417.3" y2="595.6" stroke="#DCD8D8" stroke-width="1.65"/><line x1="1411.9" y1="717.5" x2="1419.1" y2="595.1" stroke="#EDEDED" stroke-width="1.65"/><line x1="1413.6" y1="716.9" x2="1420.9" y2="594.5" stroke="#D2D6D8" stroke-width="1.65"/><line x1="1417.0" y1="715.8" x2="1424.4" y2="593.5" stroke="#DCD8D8" stroke-width="1.64"/><line x1="1418.7" y1="715.2" x2="1426.2" y2="593.0" stroke="#EDEDED" stroke-width="1.64"/><line x1="1420.4" y1="714.6" x2="1427.9" y2="592.5" stroke="#D2D6D8" stroke-width="1.64"/><line x1="1423.8" y1="713.4" x2="1431.4" y2="591.4" stroke="#DCD8D8" stroke-width="1.64"/><line x1="1425.5" y1="712.9" x2="1433.2" y2="590.9" stroke="#EDEDED" stroke-width="1.63"/><line x1="1427.2" y1="712.3" x2="1434.9" y2="590.4" stroke="#D2D6D8" stroke-width="1.63"/><line x1="1430.6" y1="711.1" x2="1438.4" y2="589.4" stroke="#DCD8D8" stroke-width="1.63"/><line x1="1432.3" y1="710.5" x2="1440.1" y2="588.9" stroke="#EDEDED" stroke-width="1.62"/><line x1="1434.0" y1="710.0" x2="1441.8" y2="588.4" stroke="#D2D6D8" stroke-width="1.62"/><line x1="1437.3" y1="708.8" x2="1445.3" y2="587.3" stroke="#DCD8D8" stroke-width="1.62"/><line x1="1439.0" y1="708.2" x2="1447.0" y2="586.8" stroke="#EDEDED" stroke-width="1.62"/><line x1="1440.7" y1="707.7" x2="1448.8" y2="586.3" stroke="#D2D6D8" stroke-width="1.61"/><line x1="1444.1" y1="706.5" x2="1452.2" y2="585.3" stroke="#DCD8D8" stroke-width="1.61"/><line x1="1445.7" y1="706.0" x2="1453.9" y2="584.8" stroke="#EDEDED" stroke-width="1.61"/><line x1="1447.4" y1="705.4" x2="1455.6" y2="584.3" stroke="#D2D6D8" stroke-width="1.61"/><line x1="1450.7" y1="704.3" x2="1459.1" y2="583.3" stroke="#DCD8D8" stroke-width="1.60"/><line x1="1452.4" y1="703.7" x2="1460.8" y2="582.8" stroke="#EDEDED" stroke-width="1.60"/><line x1="1454.1" y1="703.1" x2="1462.5" y2="582.3" stroke="#D2D6D8" stroke-width="1.60"/><line x1="1457.4" y1="702.0" x2="1465.9" y2="581.3" stroke="#DCD8D8" stroke-width="1.59"/><line x1="1459.0" y1="701.4" x2="1467.6" y2="580.8" stroke="#EDEDED" stroke-width="1.59"/><line x1="1460.7" y1="700.9" x2="1469.3" y2="580.3" stroke="#D2D6D8" stroke-width="1.59"/><line x1="1464.0" y1="699.7" x2="1472.7" y2="579.3" stroke="#DCD8D8" stroke-width="1.58"/><line x1="1465.6" y1="699.2" x2="1474.4" y2="578.8" stroke="#EDEDED" stroke-width="1.58"/><line x1="1467.3" y1="698.6" x2="1476.0" y2="578.3" stroke="#D2D6D8" stroke-width="1.58"/><line x1="1470.6" y1="697.5" x2="1479.4" y2="577.3" stroke="#DCD8D8" stroke-width="1.58"/><line x1="1472.2" y1="696.9" x2="1481.1" y2="576.8" stroke="#EDEDED" stroke-width="1.57"/><line x1="1473.8" y1="696.4" x2="1482.8" y2="576.3" stroke="#D2D6D8" stroke-width="1.57"/><line x1="1477.1" y1="695.3" x2="1486.1" y2="575.3" stroke="#DCD8D8" stroke-width="1.57"/><line x1="1478.7" y1="694.7" x2="1487.8" y2="574.8" stroke="#EDEDED" stroke-width="1.57"/><line x1="1480.4" y1="694.1" x2="1489.5" y2="574.3" stroke="#D2D6D8" stroke-width="1.56"/><line x1="1483.6" y1="693.0" x2="1492.8" y2="573.3" stroke="#DCD8D8" stroke-width="1.56"/><line x1="1485.2" y1="692.5" x2="1494.5" y2="572.8" stroke="#EDEDED" stroke-width="1.56"/><line x1="1486.9" y1="691.9" x2="1496.1" y2="572.4" stroke="#D2D6D8" stroke-width="1.56"/><line x1="1490.1" y1="690.8" x2="1499.5" y2="571.4" stroke="#DCD8D8" stroke-width="1.55"/><line x1="1491.7" y1="690.3" x2="1501.1" y2="570.9" stroke="#EDEDED" stroke-width="1.55"/><line x1="1493.3" y1="689.7" x2="1502.8" y2="570.4" stroke="#D2D6D8" stroke-width="1.55"/><line x1="1496.5" y1="688.6" x2="1506.1" y2="569.4" stroke="#DCD8D8" stroke-width="1.54"/><line x1="1498.1" y1="688.1" x2="1507.7" y2="568.9" stroke="#EDEDED" stroke-width="1.54"/><line x1="1499.7" y1="687.5" x2="1509.3" y2="568.5" stroke="#D2D6D8" stroke-width="1.54"/><line x1="1502.9" y1="686.4" x2="1512.6" y2="567.5" stroke="#DCD8D8" stroke-width="1.54"/><line x1="1504.5" y1="685.9" x2="1514.3" y2="567.0" stroke="#EDEDED" stroke-width="1.53"/><line x1="1506.1" y1="685.4" x2="1515.9" y2="566.5" stroke="#D2D6D8" stroke-width="1.53"/><line x1="1509.3" y1="684.3" x2="1519.2" y2="565.6" stroke="#DCD8D8" stroke-width="1.53"/><line x1="1510.9" y1="683.7" x2="1520.8" y2="565.1" stroke="#EDEDED" stroke-width="1.53"/><line x1="1512.5" y1="683.2" x2="1522.4" y2="564.6" stroke="#D2D6D8" stroke-width="1.52"/><line x1="1515.6" y1="682.1" x2="1525.7" y2="563.7" stroke="#DCD8D8" stroke-width="1.52"/><line x1="1517.2" y1="681.6" x2="1527.3" y2="563.2" stroke="#EDEDED" stroke-width="1.52"/><line x1="1518.8" y1="681.0" x2="1528.9" y2="562.7" stroke="#D2D6D8" stroke-width="1.52"/><line x1="1522.0" y1="679.9" x2="1532.1" y2="561.7" stroke="#DCD8D8" stroke-width="1.51"/><line x1="1523.5" y1="679.4" x2="1533.8" y2="561.3" stroke="#EDEDED" stroke-width="1.51"/><line x1="1525.1" y1="678.9" x2="1535.4" y2="560.8" stroke="#D2D6D8" stroke-width="1.51"/><line x1="1528.2" y1="677.8" x2="1538.6" y2="559.8" stroke="#DCD8D8" stroke-width="1.50"/><line x1="1529.8" y1="677.3" x2="1540.2" y2="559.4" stroke="#EDEDED" stroke-width="1.50"/><line x1="1531.4" y1="676.7" x2="1541.8" y2="558.9" stroke="#D2D6D8" stroke-width="1.50"/><line x1="1534.5" y1="675.7" x2="1545.0" y2="558.0" stroke="#DCD8D8" stroke-width="1.50"/><line x1="1536.0" y1="675.1" x2="1546.6" y2="557.5" stroke="#EDEDED" stroke-width="1.49"/><line x1="1537.6" y1="674.6" x2="1548.2" y2="557.0" stroke="#D2D6D8" stroke-width="1.49"/><line x1="1540.7" y1="673.6" x2="1551.3" y2="556.1" stroke="#DCD8D8" stroke-width="1.49"/><line x1="1542.2" y1="673.0" x2="1552.9" y2="555.6" stroke="#EDEDED" stroke-width="1.49"/><line x1="1543.8" y1="672.5" x2="1554.5" y2="555.1" stroke="#D2D6D8" stroke-width="1.48"/><line x1="1546.9" y1="671.4" x2="1557.7" y2="554.2" stroke="#DCD8D8" stroke-width="1.48"/><line x1="1548.4" y1="670.9" x2="1559.3" y2="553.7" stroke="#EDEDED" stroke-width="1.48"/><line x1="1550.0" y1="670.4" x2="1560.8" y2="553.3" stroke="#D2D6D8" stroke-width="1.48"/><line x1="1553.0" y1="669.3" x2="1564.0" y2="552.4" stroke="#DCD8D8" stroke-width="1.47"/><line x1="1554.6" y1="668.8" x2="1565.6" y2="551.9" stroke="#EDEDED" stroke-width="1.47"/><line x1="1556.1" y1="668.3" x2="1567.1" y2="551.4" stroke="#D2D6D8" stroke-width="1.47"/><line x1="1559.2" y1="667.3" x2="1570.3" y2="550.5" stroke="#DCD8D8" stroke-width="1.47"/><line x1="1560.7" y1="666.7" x2="1571.8" y2="550.0" stroke="#EDEDED" stroke-width="1.46"/><line x1="1562.2" y1="666.2" x2="1573.4" y2="549.6" stroke="#D2D6D8" stroke-width="1.46"/><line x1="1565.2" y1="665.2" x2="1576.5" y2="548.7" stroke="#DCD8D8" stroke-width="1.46"/><line x1="1566.8" y1="664.7" x2="1578.0" y2="548.2" stroke="#EDEDED" stroke-width="1.46"/><line x1="1568.3" y1="664.1" x2="1579.6" y2="547.8" stroke="#D2D6D8" stroke-width="1.45"/><line x1="1571.3" y1="663.1" x2="1582.7" y2="546.8" stroke="#DCD8D8" stroke-width="1.45"/><line x1="1572.8" y1="662.6" x2="1584.2" y2="546.4" stroke="#EDEDED" stroke-width="1.45"/><line x1="1574.3" y1="662.1" x2="1585.8" y2="545.9" stroke="#D2D6D8" stroke-width="1.45"/><line x1="1127.7" y1="734.6" x2="642.2" y2="382.5" stroke="#6A6A6A" stroke-width="0.7" stroke-dasharray="2,1.2"/><line x1="1128.2" y1="734.6" x2="1581.9" y2="592.4" stroke="#6A6A6A" stroke-width="0.7" stroke-dasharray="2,1.2"/><line x1="1127.4" y1="711.0" x2="640.3" y2="366.8" stroke="#6A6A6A" stroke-width="0.7" stroke-dasharray="2,1.2"/><line x1="1127.9" y1="711.1" x2="1584.0" y2="571.8" stroke="#6A6A6A" stroke-width="0.7" stroke-dasharray="2,1.2"/><line x1="1128.7" y1="813.9" x2="648.8" y2="435.9" stroke="#F4F4F4" stroke-width="0.8" /><line x1="1129.2" y1="813.2" x2="1575.1" y2="661.2" stroke="#F4F4F4" stroke-width="0.8" />
<polygon points="1126.2,683.5 635.5,347.1 634.9,342.6 1126.1,676.6" fill="#6A7486" stroke="#6A7486" stroke-width="0.5" stroke-linejoin="round" /><polygon points="1126.1,676.6 1134.7,674.1 641.0,341.7 634.9,342.6" fill="#8C96AB" stroke="#8C96AB" stroke-width="0.5" stroke-linejoin="round" /><polygon points="1126.2,683.5 1590.8,546.2 1591.4,540.2 1126.1,676.6" fill="#5F6A7C" stroke="#5F6A7C" stroke-width="0.5" stroke-linejoin="round" /><polygon points="1126.1,676.6 1591.4,540.2 1585.1,537.6 1120.7,672.9" fill="#8C96AB" stroke="#8C96AB" stroke-width="0.5" stroke-linejoin="round" />
<polygon points="645.9,464.6 639.2,459.1 636.4,436.8 643.1,442.2" fill="#8F008F" stroke="#8F008F" stroke-width="0.5" stroke-linejoin="round" /><polygon points="645.9,464.6 657.1,462.5 654.3,440.2 643.1,442.2" fill="#880088" stroke="#880088" stroke-width="0.5" stroke-linejoin="round" /><polygon points="643.1,442.2 654.3,440.2 647.5,434.8 636.4,436.8" fill="#C300C3" stroke="#C300C3" stroke-width="0.5" stroke-linejoin="round" /><polygon points="676.8,490.2 669.5,484.2 666.7,461.2 674.0,467.0" fill="#8F008F" stroke="#8F008F" stroke-width="0.5" stroke-linejoin="round" /><polygon points="676.8,490.2 688.3,487.9 685.6,464.8 674.0,467.0" fill="#880088" stroke="#880088" stroke-width="0.5" stroke-linejoin="round" /><polygon points="674.0,467.0 685.6,464.8 678.2,459.0 666.7,461.2" fill="#C300C3" stroke="#C300C3" stroke-width="0.5" stroke-linejoin="round" /><polygon points="710.2,517.9 702.3,511.4 699.6,487.6 707.5,493.9" fill="#8F008F" stroke="#8F008F" stroke-width="0.5" stroke-linejoin="round" /><polygon points="710.2,517.9 722.1,515.4 719.5,491.5 707.5,493.9" fill="#880088" stroke="#880088" stroke-width="0.5" stroke-linejoin="round" /><polygon points="707.5,493.9 719.5,491.5 711.5,485.2 699.6,487.6" fill="#C300C3" stroke="#C300C3" stroke-width="0.5" stroke-linejoin="round" /><polygon points="746.6,548.0 738.0,540.9 735.4,516.2 744.0,523.2" fill="#8F008F" stroke="#8F008F" stroke-width="0.5" stroke-linejoin="round" /><polygon points="746.6,548.0 758.8,545.3 756.3,520.6 744.0,523.2" fill="#880088" stroke="#880088" stroke-width="0.5" stroke-linejoin="round" /><polygon points="744.0,523.2 756.3,520.6 747.6,513.7 735.4,516.2" fill="#C300C3" stroke="#C300C3" stroke-width="0.5" stroke-linejoin="round" /><polygon points="786.2,580.8 776.8,573.0 774.4,547.5 783.8,555.1" fill="#8F008F" stroke="#8F008F" stroke-width="0.5" stroke-linejoin="round" /><polygon points="786.2,580.8 798.8,577.9 796.5,552.2 783.8,555.1" fill="#880088" stroke="#880088" stroke-width="0.5" stroke-linejoin="round" /><polygon points="783.8,555.1 796.5,552.2 787.0,544.7 774.4,547.5" fill="#C300C3" stroke="#C300C3" stroke-width="0.5" stroke-linejoin="round" /><polygon points="829.6,616.8 819.3,608.2 817.0,581.7 827.3,590.0" fill="#8F008F" stroke="#8F008F" stroke-width="0.5" stroke-linejoin="round" /><polygon points="829.6,616.8 842.7,613.5 840.5,586.9 827.3,590.0" fill="#880088" stroke="#880088" stroke-width="0.5" stroke-linejoin="round" /><polygon points="827.3,590.0 840.5,586.9 830.1,578.7 817.0,581.7" fill="#C300C3" stroke="#C300C3" stroke-width="0.5" stroke-linejoin="round" /><polygon points="877.4,656.3 866.0,646.9 863.9,619.4 875.3,628.5" fill="#8F008F" stroke="#8F008F" stroke-width="0.5" stroke-linejoin="round" /><polygon points="877.4,656.3 890.9,652.8 888.9,625.0 875.3,628.5" fill="#880088" stroke="#880088" stroke-width="0.5" stroke-linejoin="round" /><polygon points="875.3,628.5 888.9,625.0 877.4,616.0 863.9,619.4" fill="#C300C3" stroke="#C300C3" stroke-width="0.5" stroke-linejoin="round" /><polygon points="930.2,700.0 917.6,689.6 915.7,660.9 928.4,671.0" fill="#8F008F" stroke="#8F008F" stroke-width="0.5" stroke-linejoin="round" /><polygon points="930.2,700.0 944.1,696.1 942.4,667.2 928.4,671.0" fill="#880088" stroke="#880088" stroke-width="0.5" stroke-linejoin="round" /><polygon points="928.4,671.0 942.4,667.2 929.7,657.2 915.7,660.9" fill="#C300C3" stroke="#C300C3" stroke-width="0.5" stroke-linejoin="round" /><polygon points="988.8,748.6 974.8,737.0 973.3,707.1 987.4,718.3" fill="#8F008F" stroke="#8F008F" stroke-width="0.5" stroke-linejoin="round" /><polygon points="988.8,748.6 1003.2,744.2 1001.9,714.1 987.4,718.3" fill="#880088" stroke="#880088" stroke-width="0.5" stroke-linejoin="round" /><polygon points="987.4,718.3 1001.9,714.1 987.7,702.9 973.3,707.1" fill="#C300C3" stroke="#C300C3" stroke-width="0.5" stroke-linejoin="round" /><polygon points="1054.3,802.8 1038.7,789.9 1037.6,758.6 1053.3,771.3" fill="#8F008F" stroke="#8F008F" stroke-width="0.5" stroke-linejoin="round" /><polygon points="1054.3,802.8 1069.3,797.9 1068.4,766.5 1053.3,771.3" fill="#880088" stroke="#880088" stroke-width="0.5" stroke-linejoin="round" /><polygon points="1053.3,771.3 1068.4,766.5 1052.5,753.9 1037.6,758.6" fill="#C300C3" stroke="#C300C3" stroke-width="0.5" stroke-linejoin="round" /><polygon points="1572.3,701.7 1559.4,695.0 1562.2,666.2 1575.2,672.7" fill="#8F008F" stroke="#8F008F" stroke-width="0.5" stroke-linejoin="round" /><polygon points="1572.3,701.7 1590.5,695.2 1593.5,666.4 1575.2,672.7" fill="#880088" stroke="#880088" stroke-width="0.5" stroke-linejoin="round" /><polygon points="1575.2,672.7 1593.5,666.4 1580.4,660.0 1562.2,666.2" fill="#C300C3" stroke="#C300C3" stroke-width="0.5" stroke-linejoin="round" /><polygon points="1473.7,737.0 1461.0,729.7 1463.1,700.0 1475.9,707.1" fill="#8F008F" stroke="#8F008F" stroke-width="0.5" stroke-linejoin="round" /><polygon points="1473.7,737.0 1493.4,729.9 1495.7,700.2 1475.9,707.1" fill="#880088" stroke="#880088" stroke-width="0.5" stroke-linejoin="round" /><polygon points="1475.9,707.1 1495.7,700.2 1482.9,693.3 1463.1,700.0" fill="#C300C3" stroke="#C300C3" stroke-width="0.5" stroke-linejoin="round" /><polygon points="1366.6,775.2 1354.3,767.4 1355.7,736.7 1368.1,744.3" fill="#8F008F" stroke="#8F008F" stroke-width="0.5" stroke-linejoin="round" /><polygon points="1366.6,775.2 1388.0,767.6 1389.7,736.9 1368.1,744.3" fill="#880088" stroke="#880088" stroke-width="0.5" stroke-linejoin="round" /><polygon points="1368.1,744.3 1389.7,736.9 1377.2,729.4 1355.7,736.7" fill="#C300C3" stroke="#C300C3" stroke-width="0.5" stroke-linejoin="round" /><polygon points="1250.1,816.8 1238.3,808.3 1238.8,776.6 1250.7,784.9" fill="#8F008F" stroke="#8F008F" stroke-width="0.5" stroke-linejoin="round" /><polygon points="1250.1,816.8 1273.4,808.5 1274.2,776.8 1250.7,784.9" fill="#880088" stroke="#880088" stroke-width="0.5" stroke-linejoin="round" /><polygon points="1250.7,784.9 1274.2,776.8 1262.2,768.6 1238.8,776.6" fill="#C300C3" stroke="#C300C3" stroke-width="0.5" stroke-linejoin="round" /><polygon points="1126.8,863.8 1107.3,847.6 1106.7,814.9 1126.4,830.7" fill="#8F008F" stroke="#8F008F" stroke-width="0.5" stroke-linejoin="round" /><polygon points="1126.8,863.8 1156.7,853.0 1156.6,820.2 1126.4,830.7" fill="#880088" stroke="#880088" stroke-width="0.5" stroke-linejoin="round" /><polygon points="1126.4,830.7 1156.6,820.2 1136.6,804.8 1106.7,814.9" fill="#C300C3" stroke="#C300C3" stroke-width="0.5" stroke-linejoin="round" />
<polygon points="1127.2,667.7 1587.5,534.2 986.9,285.7 636.9,338.2" fill="#62C4A1" stroke="#62C4A1" stroke-width="0.5" stroke-linejoin="round" /><polygon points="637.7,338.7 988.0,286.2 987.8,281.7 637.1,333.8" fill="#5F6A7C" stroke="#5F6A7C" stroke-width="0.5" stroke-linejoin="round" /><polygon points="637.1,333.8 987.8,281.7 985.7,280.9 635.5,332.7" fill="#8C96AB" stroke="#8C96AB" stroke-width="0.5" stroke-linejoin="round" /><polygon points="668.9,359.7 1028.5,302.9 1028.3,298.4 668.3,354.6" fill="#5F6A7C" stroke="#5F6A7C" stroke-width="0.5" stroke-linejoin="round" /><polygon points="668.3,354.6 1028.3,298.4 1026.1,297.4 666.5,353.4" fill="#8C96AB" stroke="#8C96AB" stroke-width="0.5" stroke-linejoin="round" /><polygon points="702.7,382.4 1072.1,321.0 1071.9,316.2 702.1,377.1" fill="#5F6A7C" stroke="#5F6A7C" stroke-width="0.5" stroke-linejoin="round" /><polygon points="702.1,377.1 1071.9,316.2 1069.5,315.2 700.2,375.8" fill="#8C96AB" stroke="#8C96AB" stroke-width="0.5" stroke-linejoin="round" /><polygon points="739.4,407.1 1119.0,340.4 1119.0,335.5 738.9,401.6" fill="#5F6A7C" stroke="#5F6A7C" stroke-width="0.5" stroke-linejoin="round" /><polygon points="738.9,401.6 1119.0,335.5 1116.3,334.4 736.8,400.2" fill="#8C96AB" stroke="#8C96AB" stroke-width="0.5" stroke-linejoin="round" /><polygon points="779.6,434.1 1169.8,361.4 1169.8,356.3 779.1,428.4" fill="#5F6A7C" stroke="#5F6A7C" stroke-width="0.5" stroke-linejoin="round" /><polygon points="779.1,428.4 1169.8,356.3 1167.0,355.2 776.8,426.9" fill="#8C96AB" stroke="#8C96AB" stroke-width="0.5" stroke-linejoin="round" /><polygon points="823.7,463.7 1225.0,384.2 1225.0,379.0 823.2,457.8" fill="#5F6A7C" stroke="#5F6A7C" stroke-width="0.5" stroke-linejoin="round" /><polygon points="823.2,457.8 1225.0,379.0 1221.9,377.7 820.7,456.2" fill="#8C96AB" stroke="#8C96AB" stroke-width="0.5" stroke-linejoin="round" /><polygon points="872.3,496.4 1285.0,409.1 1285.1,403.6 871.9,490.3" fill="#5F6A7C" stroke="#5F6A7C" stroke-width="0.5" stroke-linejoin="round" /><polygon points="871.9,490.3 1285.1,403.6 1281.7,402.2 869.1,488.4" fill="#8C96AB" stroke="#8C96AB" stroke-width="0.5" stroke-linejoin="round" /><polygon points="926.2,532.6 1350.6,436.2 1350.8,430.5 925.8,526.2" fill="#5F6A7C" stroke="#5F6A7C" stroke-width="0.5" stroke-linejoin="round" /><polygon points="925.8,526.2 1350.8,430.5 1347.1,429.0 922.7,524.1" fill="#8C96AB" stroke="#8C96AB" stroke-width="0.5" stroke-linejoin="round" /><polygon points="986.2,573.0 1422.6,466.0 1423.0,460.1 985.9,566.2" fill="#5F6A7C" stroke="#5F6A7C" stroke-width="0.5" stroke-linejoin="round" /><polygon points="985.9,566.2 1423.0,460.1 1418.9,458.4 982.5,563.9" fill="#8C96AB" stroke="#8C96AB" stroke-width="0.5" stroke-linejoin="round" /><polygon points="1053.5,618.2 1502.0,498.8 1502.5,492.7 1053.3,611.1" fill="#5F6A7C" stroke="#5F6A7C" stroke-width="0.5" stroke-linejoin="round" /><polygon points="1053.3,611.1 1502.5,492.7 1498.0,490.8 1049.4,608.5" fill="#8C96AB" stroke="#8C96AB" stroke-width="0.5" stroke-linejoin="round" /><polygon points="1585.0,534.9 985.0,286.0 984.8,281.6 1585.7,528.4" fill="#6A7486" stroke="#6A7486" stroke-width="0.5" stroke-linejoin="round" /><polygon points="1585.7,528.4 1590.5,527.1 988.7,281.0 984.8,281.6" fill="#8C96AB" stroke="#8C96AB" stroke-width="0.5" stroke-linejoin="round" /><polygon points="1374.5,596.0 819.4,310.8 819.0,306.2 1374.8,589.1" fill="#6A7486" stroke="#6A7486" stroke-width="0.5" stroke-linejoin="round" /><polygon points="1374.8,589.1 1380.6,587.4 823.3,305.5 819.0,306.2" fill="#8C96AB" stroke="#8C96AB" stroke-width="0.5" stroke-linejoin="round" /><polygon points="637.1,333.8 987.8,281.7 985.7,280.9 635.5,332.7" fill="#8C96AB" stroke="#8C96AB" stroke-width="0.5" stroke-linejoin="round" /><polygon points="668.3,354.6 1028.3,298.4 1026.1,297.4 666.5,353.4" fill="#8C96AB" stroke="#8C96AB" stroke-width="0.5" stroke-linejoin="round" /><polygon points="702.1,377.1 1071.9,316.2 1069.5,315.2 700.2,375.8" fill="#8C96AB" stroke="#8C96AB" stroke-width="0.5" stroke-linejoin="round" /><polygon points="738.9,401.6 1119.0,335.5 1116.3,334.4 736.8,400.2" fill="#8C96AB" stroke="#8C96AB" stroke-width="0.5" stroke-linejoin="round" /><polygon points="779.1,428.4 1169.8,356.3 1167.0,355.2 776.8,426.9" fill="#8C96AB" stroke="#8C96AB" stroke-width="0.5" stroke-linejoin="round" /><polygon points="823.2,457.8 1225.0,379.0 1221.9,377.7 820.7,456.2" fill="#8C96AB" stroke="#8C96AB" stroke-width="0.5" stroke-linejoin="round" /><polygon points="871.9,490.3 1285.1,403.6 1281.7,402.2 869.1,488.4" fill="#8C96AB" stroke="#8C96AB" stroke-width="0.5" stroke-linejoin="round" /><polygon points="925.8,526.2 1350.8,430.5 1347.1,429.0 922.7,524.1" fill="#8C96AB" stroke="#8C96AB" stroke-width="0.5" stroke-linejoin="round" /><polygon points="985.9,566.2 1423.0,460.1 1418.9,458.4 982.5,563.9" fill="#8C96AB" stroke="#8C96AB" stroke-width="0.5" stroke-linejoin="round" /><polygon points="1053.3,611.1 1502.5,492.7 1498.0,490.8 1049.4,608.5" fill="#8C96AB" stroke="#8C96AB" stroke-width="0.5" stroke-linejoin="round" />
<polygon points="1125.6,677.7 633.8,342.8 632.6,333.5 1125.4,663.6" fill="#6A7486" stroke="#6A7486" stroke-width="0.5" stroke-linejoin="round" /><polygon points="1125.4,663.6 1135.6,660.7 639.8,332.5 632.6,333.5" fill="#8C96AB" stroke="#8C96AB" stroke-width="0.5" stroke-linejoin="round" /><polygon points="1125.6,677.7 1593.6,540.4 1594.8,528.2 1125.4,663.6" fill="#5F6A7C" stroke="#5F6A7C" stroke-width="0.5" stroke-linejoin="round" /><polygon points="1125.4,663.6 1594.8,528.2 1587.4,525.2 1118.9,659.3" fill="#8C96AB" stroke="#8C96AB" stroke-width="0.5" stroke-linejoin="round" /><polygon points="1125.6,677.7 1119.1,673.3 1118.9,659.3 1125.4,663.6" fill="#6A7486" stroke="#6A7486" stroke-width="0.5" stroke-linejoin="round" /><polygon points="1125.6,677.7 1135.7,674.7 1135.6,660.7 1125.4,663.6" fill="#5F6A7C" stroke="#5F6A7C" stroke-width="0.5" stroke-linejoin="round" /><polygon points="1125.4,663.6 1135.6,660.7 1129.1,656.4 1118.9,659.3" fill="#8C96AB" stroke="#8C96AB" stroke-width="0.5" stroke-linejoin="round" />
<polygon points="645.2,438.4 641.2,435.3 629.0,337.8 632.9,340.5" fill="#5B9958" stroke="#5B9958" stroke-width="0.5" stroke-linejoin="round" /><polygon points="645.2,438.4 650.8,437.4 638.7,339.7 632.9,340.5" fill="#4F8951" stroke="#4F8951" stroke-width="0.5" stroke-linejoin="round" /><polygon points="632.9,340.5 635.6,340.1 631.6,337.4 629.0,337.8" fill="#6FBF6F" stroke="#6FBF6F" stroke-width="0.5" stroke-linejoin="round" /><polygon points="676.0,462.9 671.7,459.5 659.7,358.7 664.0,361.6" fill="#5B9958" stroke="#5B9958" stroke-width="0.5" stroke-linejoin="round" /><polygon points="676.0,462.9 681.8,461.8 669.9,360.7 664.0,361.6" fill="#4F8951" stroke="#4F8951" stroke-width="0.5" stroke-linejoin="round" /><polygon points="664.0,361.6 666.7,361.2 662.4,358.3 659.7,358.7" fill="#6FBF6F" stroke="#6FBF6F" stroke-width="0.5" stroke-linejoin="round" /><polygon points="709.3,489.4 704.7,485.8 693.0,381.3 697.7,384.5" fill="#5B9958" stroke="#5B9958" stroke-width="0.5" stroke-linejoin="round" /><polygon points="709.3,489.4 715.3,488.3 703.8,383.5 697.7,384.5" fill="#4F8951" stroke="#4F8951" stroke-width="0.5" stroke-linejoin="round" /><polygon points="697.7,384.5 700.5,384.0 695.8,380.8 693.0,381.3" fill="#6FBF6F" stroke="#6FBF6F" stroke-width="0.5" stroke-linejoin="round" /><polygon points="745.6,518.3 740.6,514.3 729.3,405.9 734.4,409.4" fill="#5B9958" stroke="#5B9958" stroke-width="0.5" stroke-linejoin="round" /><polygon points="745.6,518.3 751.8,517.0 740.7,408.3 734.4,409.4" fill="#4F8951" stroke="#4F8951" stroke-width="0.5" stroke-linejoin="round" /><polygon points="734.4,409.4 737.3,408.9 732.2,405.4 729.3,405.9" fill="#6FBF6F" stroke="#6FBF6F" stroke-width="0.5" stroke-linejoin="round" /><polygon points="785.1,549.7 779.7,545.4 768.9,432.8 774.5,436.6" fill="#5B9958" stroke="#5B9958" stroke-width="0.5" stroke-linejoin="round" /><polygon points="785.1,549.7 791.5,548.3 781.0,435.4 774.5,436.6" fill="#4F8951" stroke="#4F8951" stroke-width="0.5" stroke-linejoin="round" /><polygon points="774.5,436.6 777.5,436.0 771.9,432.3 768.9,432.8" fill="#6FBF6F" stroke="#6FBF6F" stroke-width="0.5" stroke-linejoin="round" /><polygon points="828.5,584.2 822.4,579.4 812.4,462.3 818.5,466.5" fill="#5B9958" stroke="#5B9958" stroke-width="0.5" stroke-linejoin="round" /><polygon points="828.5,584.2 835.1,582.6 825.3,465.2 818.5,466.5" fill="#4F8951" stroke="#4F8951" stroke-width="0.5" stroke-linejoin="round" /><polygon points="818.5,466.5 821.6,465.9 815.5,461.7 812.4,462.3" fill="#6FBF6F" stroke="#6FBF6F" stroke-width="0.5" stroke-linejoin="round" /><polygon points="876.1,622.0 869.5,616.8 860.3,494.9 867.1,499.5" fill="#5B9958" stroke="#5B9958" stroke-width="0.5" stroke-linejoin="round" /><polygon points="876.1,622.0 882.9,620.3 874.1,498.0 867.1,499.5" fill="#4F8951" stroke="#4F8951" stroke-width="0.5" stroke-linejoin="round" /><polygon points="867.1,499.5 870.3,498.8 863.5,494.2 860.3,494.9" fill="#6FBF6F" stroke="#6FBF6F" stroke-width="0.5" stroke-linejoin="round" /><polygon points="928.7,663.9 921.4,658.0 913.4,530.9 920.9,536.0" fill="#5B9958" stroke="#5B9958" stroke-width="0.5" stroke-linejoin="round" /><polygon points="928.7,663.9 935.8,662.0 928.2,534.3 920.9,536.0" fill="#4F8951" stroke="#4F8951" stroke-width="0.5" stroke-linejoin="round" /><polygon points="920.9,536.0 924.3,535.2 916.7,530.1 913.4,530.9" fill="#6FBF6F" stroke="#6FBF6F" stroke-width="0.5" stroke-linejoin="round" /><polygon points="987.2,710.4 979.0,703.9 972.5,571.0 980.9,576.7" fill="#5B9958" stroke="#5B9958" stroke-width="0.5" stroke-linejoin="round" /><polygon points="987.2,710.4 994.5,708.2 988.4,574.9 980.9,576.7" fill="#4F8951" stroke="#4F8951" stroke-width="0.5" stroke-linejoin="round" /><polygon points="980.9,576.7 984.4,575.9 975.9,570.2 972.5,571.0" fill="#6FBF6F" stroke="#6FBF6F" stroke-width="0.5" stroke-linejoin="round" /><polygon points="1052.6,762.3 1043.4,755.0 1038.7,616.0 1048.1,622.4" fill="#5B9958" stroke="#5B9958" stroke-width="0.5" stroke-linejoin="round" /><polygon points="1052.6,762.3 1060.1,759.9 1056.0,620.3 1048.1,622.4" fill="#4F8951" stroke="#4F8951" stroke-width="0.5" stroke-linejoin="round" /><polygon points="1048.1,622.4 1051.8,621.4 1042.3,615.0 1038.7,616.0" fill="#6FBF6F" stroke="#6FBF6F" stroke-width="0.5" stroke-linejoin="round" /><polygon points="1575.0,666.6 1569.3,663.8 1581.7,536.2 1587.7,538.6" fill="#5B9958" stroke="#5B9958" stroke-width="0.5" stroke-linejoin="round" /><polygon points="1575.0,666.6 1586.6,662.7 1599.6,535.2 1587.7,538.6" fill="#4F8951" stroke="#4F8951" stroke-width="0.5" stroke-linejoin="round" /><polygon points="1587.7,538.6 1599.6,535.2 1596.8,534.0 1584.9,537.5" fill="#6FBF6F" stroke="#6FBF6F" stroke-width="0.5" stroke-linejoin="round" /><polygon points="1476.5,700.5 1470.8,697.4 1480.6,565.5 1486.4,568.2" fill="#5B9958" stroke="#5B9958" stroke-width="0.5" stroke-linejoin="round" /><polygon points="1476.5,700.5 1489.0,696.2 1499.3,564.5 1486.4,568.2" fill="#4F8951" stroke="#4F8951" stroke-width="0.5" stroke-linejoin="round" /><polygon points="1486.4,568.2 1499.3,564.5 1496.6,563.2 1483.7,567.0" fill="#6FBF6F" stroke="#6FBF6F" stroke-width="0.5" stroke-linejoin="round" /><polygon points="1369.5,737.2 1364.1,733.8 1370.5,597.5 1376.2,600.4" fill="#5B9958" stroke="#5B9958" stroke-width="0.5" stroke-linejoin="round" /><polygon points="1369.5,737.2 1383.2,732.5 1390.3,596.3 1376.2,600.4" fill="#4F8951" stroke="#4F8951" stroke-width="0.5" stroke-linejoin="round" /><polygon points="1376.2,600.4 1390.3,596.3 1387.6,594.9 1373.6,599.0" fill="#6FBF6F" stroke="#6FBF6F" stroke-width="0.5" stroke-linejoin="round" /><polygon points="1253.2,777.1 1247.9,773.5 1250.5,632.3 1256.0,635.5" fill="#5B9958" stroke="#5B9958" stroke-width="0.5" stroke-linejoin="round" /><polygon points="1253.2,777.1 1268.0,772.0 1271.3,631.0 1256.0,635.5" fill="#4F8951" stroke="#4F8951" stroke-width="0.5" stroke-linejoin="round" /><polygon points="1256.0,635.5 1271.3,631.0 1268.8,629.6 1253.4,634.0" fill="#6FBF6F" stroke="#6FBF6F" stroke-width="0.5" stroke-linejoin="round" /><polygon points="1125.8,821.2 1114.7,812.4 1112.4,666.6 1123.9,674.4" fill="#5B9958" stroke="#5B9958" stroke-width="0.5" stroke-linejoin="round" /><polygon points="1125.8,821.2 1143.3,815.3 1142.0,669.2 1123.9,674.4" fill="#4F8951" stroke="#4F8951" stroke-width="0.5" stroke-linejoin="round" /><polygon points="1123.9,674.4 1142.0,669.2 1139.2,667.3 1121.1,672.5" fill="#6FBF6F" stroke="#6FBF6F" stroke-width="0.5" stroke-linejoin="round" /><polygon points="1123.9,674.4 1128.3,673.2 1116.8,665.4 1112.4,666.6" fill="#6FBF6F" stroke="#6FBF6F" stroke-width="0.5" stroke-linejoin="round" /><polygon points="1371.9,649.7 1362.0,644.3 1362.3,637.5 1372.2,642.9" fill="#5B9958" stroke="#5B9958" stroke-width="0.5" stroke-linejoin="round" /><polygon points="1371.9,649.7 1393.7,642.9 1394.1,636.2 1372.2,642.9" fill="#4F8951" stroke="#4F8951" stroke-width="0.5" stroke-linejoin="round" /><polygon points="1372.2,642.9 1394.1,636.2 1384.1,630.9 1362.3,637.5" fill="#6FBF6F" stroke="#6FBF6F" stroke-width="0.5" stroke-linejoin="round" /><polygon points="1578.0,582.1 1569.5,578.3 1570.0,573.4 1578.4,577.2" fill="#5B9958" stroke="#5B9958" stroke-width="0.5" stroke-linejoin="round" /><polygon points="1578.0,582.1 1582.9,580.6 1583.4,575.7 1578.4,577.2" fill="#4F8951" stroke="#4F8951" stroke-width="0.5" stroke-linejoin="round" /><polygon points="1578.4,577.2 1583.4,575.7 1574.9,571.9 1570.0,573.4" fill="#6FBF6F" stroke="#6FBF6F" stroke-width="0.5" stroke-linejoin="round" /><polygon points="1139.7,721.2 1131.8,715.6 1131.7,708.3 1139.6,713.9" fill="#5B9958" stroke="#5B9958" stroke-width="0.5" stroke-linejoin="round" /><polygon points="1139.7,721.2 1150.4,717.8 1150.3,710.6 1139.6,713.9" fill="#4F8951" stroke="#4F8951" stroke-width="0.5" stroke-linejoin="round" /><polygon points="1139.6,713.9 1150.3,710.6 1142.4,705.1 1131.7,708.3" fill="#6FBF6F" stroke="#6FBF6F" stroke-width="0.5" stroke-linejoin="round" />
<path d="M983.3,285.3 Q983.7,280.1 987.4,281.2 Q990.4,282.0 990.4,285.3 Z" fill="#00A2AC"/><ellipse cx="984.9" cy="283.8" rx="1.1" ry="1.2" fill="#3FD0DA"/><line x1="986.7" y1="280.5" x2="986.5" y2="276.1" stroke="#1AA8B4" stroke-width="0.9"/><path d="M902.6,297.3 Q903.0,292.0 906.9,293.1 Q910.1,294.0 910.1,297.3 Z" fill="#00A2AC"/><ellipse cx="904.3" cy="295.9" rx="1.1" ry="1.3" fill="#3FD0DA"/><line x1="906.1" y1="292.5" x2="905.8" y2="287.9" stroke="#1AA8B4" stroke-width="0.9"/><path d="M1023.7,302.0 Q1024.0,296.7 1027.8,297.7 Q1030.9,298.6 1030.9,302.0 Z" fill="#00A2AC"/><ellipse cx="1025.3" cy="300.5" rx="1.1" ry="1.3" fill="#3FD0DA"/><line x1="1027.2" y1="297.1" x2="1027.0" y2="292.5" stroke="#1AA8B4" stroke-width="0.9"/><path d="M817.4,310.1 Q817.8,304.6 822.0,305.7 Q825.4,306.6 825.4,310.1 Z" fill="#00A2AC"/><ellipse cx="819.2" cy="308.5" rx="1.2" ry="1.3" fill="#3FD0DA"/><line x1="821.1" y1="305.1" x2="820.7" y2="300.4" stroke="#1AA8B4" stroke-width="0.9"/><path d="M727.5,323.5 Q727.9,317.9 732.3,319.0 Q735.9,319.9 735.9,323.5 Z" fill="#00A2AC"/><ellipse cx="729.4" cy="321.9" rx="1.3" ry="1.3" fill="#3FD0DA"/><line x1="731.3" y1="318.4" x2="730.8" y2="313.6" stroke="#1AA8B4" stroke-width="0.9"/><path d="M941.1,315.0 Q941.4,309.5 945.5,310.6 Q948.7,311.5 948.7,315.0 Z" fill="#00A2AC"/><ellipse cx="942.8" cy="313.4" rx="1.2" ry="1.3" fill="#3FD0DA"/><line x1="944.7" y1="309.9" x2="944.4" y2="305.2" stroke="#1AA8B4" stroke-width="0.9"/><path d="M627.8,340.1 Q628.3,334.4 632.9,335.6 Q636.7,336.5 636.7,340.1 Z" fill="#00A2AC"/><ellipse cx="629.8" cy="338.5" rx="1.3" ry="1.4" fill="#3FD0DA"/><line x1="631.8" y1="334.9" x2="631.2" y2="330.0" stroke="#1AA8B4" stroke-width="0.9"/><path d="M1067.1,320.0 Q1067.4,314.5 1071.3,315.6 Q1074.5,316.4 1074.5,320.0 Z" fill="#00A2AC"/><ellipse cx="1068.7" cy="318.4" rx="1.1" ry="1.3" fill="#3FD0DA"/><line x1="1070.7" y1="314.9" x2="1070.6" y2="310.2" stroke="#1AA8B4" stroke-width="0.9"/><path d="M853.7,328.7 Q854.1,323.1 858.4,324.2 Q861.9,325.1 861.9,328.7 Z" fill="#00A2AC"/><ellipse cx="855.6" cy="327.1" rx="1.2" ry="1.3" fill="#3FD0DA"/><line x1="857.5" y1="323.5" x2="857.2" y2="318.7" stroke="#1AA8B4" stroke-width="0.9"/><path d="M761.3,343.2 Q761.7,337.4 766.2,338.6 Q769.9,339.5 769.9,343.2 Z" fill="#00A2AC"/><ellipse cx="763.2" cy="341.6" rx="1.3" ry="1.4" fill="#3FD0DA"/><line x1="765.2" y1="337.9" x2="764.7" y2="332.9" stroke="#1AA8B4" stroke-width="0.9"/><path d="M982.5,334.0 Q982.9,328.3 987.0,329.4 Q990.4,330.3 990.4,334.0 Z" fill="#00A2AC"/><ellipse cx="984.3" cy="332.4" rx="1.2" ry="1.4" fill="#3FD0DA"/><line x1="986.3" y1="328.7" x2="986.1" y2="323.9" stroke="#1AA8B4" stroke-width="0.9"/><path d="M1113.9,339.4 Q1114.3,333.6 1118.3,334.8 Q1121.5,335.7 1121.5,339.4 Z" fill="#00A2AC"/><ellipse cx="1115.6" cy="337.8" rx="1.1" ry="1.4" fill="#3FD0DA"/><line x1="1117.6" y1="334.1" x2="1117.6" y2="329.2" stroke="#1AA8B4" stroke-width="0.9"/><path d="M658.6,361.1 Q659.1,355.2 663.9,356.4 Q667.8,357.3 667.8,361.1 Z" fill="#00A2AC"/><ellipse cx="660.7" cy="359.5" rx="1.4" ry="1.4" fill="#3FD0DA"/><line x1="662.7" y1="355.7" x2="662.1" y2="350.6" stroke="#1AA8B4" stroke-width="0.9"/><path d="M892.9,348.8 Q893.3,343.0 897.7,344.1 Q901.3,345.1 901.3,348.8 Z" fill="#00A2AC"/><ellipse cx="894.8" cy="347.1" rx="1.3" ry="1.4" fill="#3FD0DA"/><line x1="896.8" y1="343.4" x2="896.5" y2="338.4" stroke="#1AA8B4" stroke-width="0.9"/><path d="M1027.3,354.5 Q1027.7,348.6 1031.9,349.8 Q1035.4,350.7 1035.4,354.5 Z" fill="#00A2AC"/><ellipse cx="1029.1" cy="352.8" rx="1.2" ry="1.4" fill="#3FD0DA"/><line x1="1031.2" y1="349.1" x2="1031.0" y2="344.0" stroke="#1AA8B4" stroke-width="0.9"/><path d="M797.9,364.5 Q798.3,358.5 803.0,359.7 Q806.7,360.7 806.7,364.5 Z" fill="#00A2AC"/><ellipse cx="799.9" cy="362.8" rx="1.3" ry="1.4" fill="#3FD0DA"/><line x1="801.9" y1="359.0" x2="801.5" y2="353.9" stroke="#1AA8B4" stroke-width="0.9"/><path d="M1164.5,360.3 Q1164.9,354.4 1169.0,355.6 Q1172.3,356.5 1172.3,360.3 Z" fill="#00A2AC"/><ellipse cx="1166.3" cy="358.7" rx="1.2" ry="1.4" fill="#3FD0DA"/><line x1="1168.4" y1="354.9" x2="1168.4" y2="349.8" stroke="#1AA8B4" stroke-width="0.9"/><path d="M692.0,383.9 Q692.5,377.7 697.5,379.0 Q701.5,380.0 701.5,383.9 Z" fill="#00A2AC"/><ellipse cx="694.1" cy="382.2" rx="1.4" ry="1.5" fill="#3FD0DA"/><line x1="696.3" y1="378.2" x2="695.7" y2="373.0" stroke="#1AA8B4" stroke-width="0.9"/><path d="M935.4,370.5 Q935.8,364.5 940.3,365.7 Q944.0,366.7 944.0,370.5 Z" fill="#00A2AC"/><ellipse cx="937.3" cy="368.9" rx="1.3" ry="1.4" fill="#3FD0DA"/><line x1="939.4" y1="365.0" x2="939.1" y2="359.8" stroke="#1AA8B4" stroke-width="0.9"/><path d="M1075.9,376.7 Q1076.3,370.6 1080.6,371.9 Q1084.1,372.8 1084.1,376.7 Z" fill="#00A2AC"/><ellipse cx="1077.7" cy="375.0" rx="1.2" ry="1.5" fill="#3FD0DA"/><line x1="1079.9" y1="371.1" x2="1079.8" y2="365.9" stroke="#1AA8B4" stroke-width="0.9"/><path d="M837.6,387.6 Q838.0,381.4 842.8,382.7 Q846.7,383.7 846.7,387.6 Z" fill="#00A2AC"/><ellipse cx="839.6" cy="385.9" rx="1.4" ry="1.5" fill="#3FD0DA"/><line x1="841.8" y1="381.9" x2="841.4" y2="376.6" stroke="#1AA8B4" stroke-width="0.9"/><path d="M1219.5,383.1 Q1219.8,376.9 1224.0,378.1 Q1227.4,379.1 1227.4,383.1 Z" fill="#00A2AC"/><ellipse cx="1221.2" cy="381.3" rx="1.2" ry="1.5" fill="#3FD0DA"/><line x1="1223.5" y1="377.4" x2="1223.5" y2="372.1" stroke="#1AA8B4" stroke-width="0.9"/><path d="M728.4,408.7 Q728.9,402.3 734.0,403.6 Q738.2,404.6 738.2,408.7 Z" fill="#00A2AC"/><ellipse cx="730.6" cy="406.9" rx="1.5" ry="1.5" fill="#3FD0DA"/><line x1="732.8" y1="402.8" x2="732.2" y2="397.3" stroke="#1AA8B4" stroke-width="0.9"/><path d="M981.5,394.2 Q982.0,388.0 986.6,389.2 Q990.3,390.2 990.3,394.2 Z" fill="#00A2AC"/><ellipse cx="983.5" cy="392.5" rx="1.3" ry="1.5" fill="#3FD0DA"/><line x1="985.7" y1="388.5" x2="985.5" y2="383.1" stroke="#1AA8B4" stroke-width="0.9"/><path d="M1128.7,400.9 Q1129.1,394.6 1133.6,395.9 Q1137.2,396.9 1137.2,400.9 Z" fill="#00A2AC"/><ellipse cx="1130.6" cy="399.2" rx="1.3" ry="1.5" fill="#3FD0DA"/><line x1="1132.9" y1="395.1" x2="1132.8" y2="389.7" stroke="#1AA8B4" stroke-width="0.9"/><path d="M880.9,412.8 Q881.3,406.4 886.3,407.7 Q890.3,408.7 890.3,412.8 Z" fill="#00A2AC"/><ellipse cx="883.0" cy="411.0" rx="1.4" ry="1.5" fill="#3FD0DA"/><line x1="885.3" y1="406.9" x2="884.9" y2="401.4" stroke="#1AA8B4" stroke-width="0.9"/><path d="M1279.3,407.8 Q1279.7,401.4 1284.0,402.7 Q1287.4,403.7 1287.4,407.8 Z" fill="#00A2AC"/><ellipse cx="1281.1" cy="406.0" rx="1.2" ry="1.5" fill="#3FD0DA"/><line x1="1283.5" y1="401.9" x2="1283.6" y2="396.5" stroke="#1AA8B4" stroke-width="0.9"/><path d="M1031.8,420.0 Q1032.3,413.5 1037.1,414.8 Q1040.9,415.9 1040.9,420.0 Z" fill="#00A2AC"/><ellipse cx="1033.9" cy="418.2" rx="1.4" ry="1.6" fill="#3FD0DA"/><line x1="1036.2" y1="414.0" x2="1036.0" y2="408.5" stroke="#1AA8B4" stroke-width="0.9"/><path d="M768.1,435.8 Q768.6,429.1 773.9,430.5 Q778.2,431.5 778.2,435.8 Z" fill="#00A2AC"/><ellipse cx="770.4" cy="433.9" rx="1.5" ry="1.6" fill="#3FD0DA"/><line x1="772.7" y1="429.7" x2="772.2" y2="424.0" stroke="#1AA8B4" stroke-width="0.9"/><path d="M1186.4,427.4 Q1186.8,420.8 1191.4,422.1 Q1195.1,423.2 1195.1,427.4 Z" fill="#00A2AC"/><ellipse cx="1188.4" cy="425.5" rx="1.3" ry="1.6" fill="#3FD0DA"/><line x1="1190.8" y1="421.3" x2="1190.8" y2="415.7" stroke="#1AA8B4" stroke-width="0.9"/><path d="M1344.7,434.9 Q1345.1,428.2 1349.4,429.6 Q1353.0,430.6 1353.0,434.9 Z" fill="#00A2AC"/><ellipse cx="1346.5" cy="433.0" rx="1.2" ry="1.6" fill="#3FD0DA"/><line x1="1349.0" y1="428.8" x2="1349.2" y2="423.1" stroke="#1AA8B4" stroke-width="0.9"/><path d="M928.2,440.4 Q928.7,433.7 933.8,435.1 Q937.9,436.1 937.9,440.4 Z" fill="#00A2AC"/><ellipse cx="930.4" cy="438.5" rx="1.5" ry="1.6" fill="#3FD0DA"/><line x1="932.8" y1="434.3" x2="932.5" y2="428.5" stroke="#1AA8B4" stroke-width="0.9"/><path d="M1087.0,448.3 Q1087.4,441.5 1092.3,442.9 Q1096.3,443.9 1096.3,448.3 Z" fill="#00A2AC"/><ellipse cx="1089.1" cy="446.4" rx="1.4" ry="1.6" fill="#3FD0DA"/><line x1="1091.5" y1="442.1" x2="1091.4" y2="436.2" stroke="#1AA8B4" stroke-width="0.9"/><path d="M811.8,465.5 Q812.3,458.6 817.8,460.0 Q822.2,461.1 822.2,465.5 Z" fill="#00A2AC"/><ellipse cx="814.1" cy="463.6" rx="1.6" ry="1.7" fill="#3FD0DA"/><line x1="816.6" y1="459.1" x2="816.1" y2="453.2" stroke="#1AA8B4" stroke-width="0.9"/><path d="M1249.7,456.3 Q1250.1,449.5 1254.8,450.8 Q1258.6,451.9 1258.6,456.3 Z" fill="#00A2AC"/><ellipse cx="1251.7" cy="454.4" rx="1.3" ry="1.6" fill="#3FD0DA"/><line x1="1254.2" y1="450.0" x2="1254.3" y2="444.2" stroke="#1AA8B4" stroke-width="0.9"/><path d="M1416.4,464.6 Q1416.9,457.7 1421.3,459.0 Q1424.9,460.1 1424.9,464.6 Z" fill="#00A2AC"/><ellipse cx="1418.4" cy="462.6" rx="1.3" ry="1.7" fill="#3FD0DA"/><line x1="1421.0" y1="458.2" x2="1421.3" y2="452.3" stroke="#1AA8B4" stroke-width="0.9"/><path d="M980.3,470.7 Q980.8,463.7 986.0,465.1 Q990.3,466.3 990.3,470.7 Z" fill="#00A2AC"/><ellipse cx="982.5" cy="468.8" rx="1.5" ry="1.7" fill="#3FD0DA"/><line x1="985.0" y1="464.3" x2="984.8" y2="458.3" stroke="#1AA8B4" stroke-width="0.9"/><path d="M1147.6,479.4 Q1148.1,472.3 1153.1,473.7 Q1157.2,474.8 1157.2,479.4 Z" fill="#00A2AC"/><ellipse cx="1149.8" cy="477.4" rx="1.4" ry="1.7" fill="#3FD0DA"/><line x1="1152.4" y1="472.9" x2="1152.3" y2="466.8" stroke="#1AA8B4" stroke-width="0.9"/><path d="M1319.3,488.2 Q1319.8,481.1 1324.6,482.5 Q1328.4,483.6 1328.4,488.2 Z" fill="#00A2AC"/><ellipse cx="1321.4" cy="486.2" rx="1.4" ry="1.7" fill="#3FD0DA"/><line x1="1324.1" y1="481.7" x2="1324.3" y2="475.5" stroke="#1AA8B4" stroke-width="0.9"/><path d="M859.9,498.3 Q860.4,491.1 866.1,492.5 Q870.7,493.7 870.7,498.3 Z" fill="#00A2AC"/><ellipse cx="862.3" cy="496.2" rx="1.6" ry="1.7" fill="#3FD0DA"/><line x1="864.9" y1="491.6" x2="864.4" y2="485.5" stroke="#1AA8B4" stroke-width="0.9"/><path d="M1495.6,497.3 Q1496.0,490.1 1500.6,491.5 Q1504.2,492.7 1504.2,497.3 Z" fill="#00A2AC"/><ellipse cx="1497.5" cy="495.3" rx="1.3" ry="1.7" fill="#3FD0DA"/><line x1="1500.3" y1="490.7" x2="1500.8" y2="484.5" stroke="#1AA8B4" stroke-width="0.9"/><path d="M1037.7,504.2 Q1038.2,496.9 1043.6,498.3 Q1048.0,499.5 1048.0,504.2 Z" fill="#00A2AC"/><ellipse cx="1040.0" cy="502.1" rx="1.5" ry="1.7" fill="#3FD0DA"/><line x1="1042.7" y1="497.5" x2="1042.5" y2="491.2" stroke="#1AA8B4" stroke-width="0.9"/><path d="M1214.6,513.7 Q1215.1,506.3 1220.3,507.8 Q1224.5,509.0 1224.5,513.7 Z" fill="#00A2AC"/><ellipse cx="1216.8" cy="511.6" rx="1.5" ry="1.8" fill="#3FD0DA"/><line x1="1219.6" y1="506.9" x2="1219.7" y2="500.6" stroke="#1AA8B4" stroke-width="0.9"/><path d="M1587.7,537.8 Q1588.1,530.3 1592.9,531.8 Q1596.8,533.0 1596.8,537.8 Z" fill="#00A2AC"/><ellipse cx="1589.7" cy="535.7" rx="1.4" ry="1.8" fill="#3FD0DA"/><line x1="1592.8" y1="530.9" x2="1593.5" y2="524.4" stroke="#1AA8B4" stroke-width="0.9"/><path d="M1396.4,523.5 Q1396.9,516.0 1401.8,517.5 Q1405.7,518.7 1405.7,523.5 Z" fill="#00A2AC"/><ellipse cx="1398.5" cy="521.4" rx="1.4" ry="1.8" fill="#3FD0DA"/><line x1="1401.4" y1="516.6" x2="1401.7" y2="510.2" stroke="#1AA8B4" stroke-width="0.9"/><path d="M913.2,534.6 Q913.8,527.0 919.6,528.6 Q924.4,529.8 924.4,534.6 Z" fill="#00A2AC"/><ellipse cx="915.7" cy="532.5" rx="1.7" ry="1.8" fill="#3FD0DA"/><line x1="918.5" y1="527.7" x2="918.1" y2="521.2" stroke="#1AA8B4" stroke-width="0.9"/><path d="M1101.4,541.2 Q1101.9,533.6 1107.5,535.2 Q1112.1,536.4 1112.1,541.2 Z" fill="#00A2AC"/><ellipse cx="1103.8" cy="539.1" rx="1.6" ry="1.8" fill="#3FD0DA"/><line x1="1106.6" y1="534.3" x2="1106.5" y2="527.7" stroke="#1AA8B4" stroke-width="0.9"/><path d="M1289.1,551.8 Q1289.6,544.1 1294.9,545.7 Q1299.2,546.9 1299.2,551.8 Z" fill="#00A2AC"/><ellipse cx="1291.4" cy="549.7" rx="1.5" ry="1.8" fill="#3FD0DA"/><line x1="1294.3" y1="544.8" x2="1294.5" y2="538.1" stroke="#1AA8B4" stroke-width="0.9"/><path d="M1486.7,567.3 Q1487.2,559.5 1492.2,561.0 Q1496.3,562.3 1496.3,567.3 Z" fill="#00A2AC"/><ellipse cx="1488.9" cy="565.1" rx="1.4" ry="1.9" fill="#3FD0DA"/><line x1="1491.9" y1="560.1" x2="1492.4" y2="553.4" stroke="#1AA8B4" stroke-width="0.9"/><path d="M972.6,575.0 Q973.2,567.1 979.3,568.7 Q984.2,570.0 984.2,575.0 Z" fill="#00A2AC"/><ellipse cx="975.2" cy="572.8" rx="1.7" ry="1.9" fill="#3FD0DA"/><line x1="978.1" y1="567.8" x2="977.8" y2="561.0" stroke="#1AA8B4" stroke-width="0.9"/><path d="M1172.5,582.6 Q1173.1,574.7 1178.8,576.3 Q1183.5,577.5 1183.5,582.6 Z" fill="#00A2AC"/><ellipse cx="1175.0" cy="580.4" rx="1.6" ry="1.9" fill="#3FD0DA"/><line x1="1178.0" y1="575.3" x2="1178.0" y2="568.4" stroke="#1AA8B4" stroke-width="0.9"/><path d="M1376.8,599.3 Q1377.3,591.2 1382.7,592.8 Q1387.1,594.1 1387.1,599.3 Z" fill="#00A2AC"/><ellipse cx="1379.1" cy="597.0" rx="1.6" ry="1.9" fill="#3FD0DA"/><line x1="1382.2" y1="591.8" x2="1382.6" y2="584.9" stroke="#1AA8B4" stroke-width="0.9"/><path d="M1039.2,620.4 Q1039.8,612.1 1046.1,613.7 Q1051.2,615.1 1051.2,620.4 Z" fill="#00A2AC"/><ellipse cx="1041.9" cy="618.0" rx="1.8" ry="2.0" fill="#3FD0DA"/><line x1="1045.0" y1="612.8" x2="1044.8" y2="605.7" stroke="#1AA8B4" stroke-width="0.9"/><path d="M1256.7,634.2 Q1257.3,625.8 1263.2,627.5 Q1268.1,628.8 1268.1,634.2 Z" fill="#00A2AC"/><ellipse cx="1259.3" cy="631.8" rx="1.7" ry="2.0" fill="#3FD0DA"/><line x1="1262.5" y1="626.5" x2="1262.7" y2="619.3" stroke="#1AA8B4" stroke-width="0.9"/><path d="M1118.6,674.4 Q1119.2,665.7 1125.8,667.4 Q1131.1,668.8 1131.1,674.4 Z" fill="#00A2AC"/><ellipse cx="1121.4" cy="671.9" rx="1.9" ry="2.1" fill="#3FD0DA"/><line x1="1124.7" y1="666.4" x2="1124.6" y2="658.9" stroke="#1AA8B4" stroke-width="0.9"/>
<line x1="976.6" y1="875.5" x2="975.6" y2="856.4" stroke="#B00000" stroke-width="1.6" /><line x1="542.0" y1="461.6" x2="540.1" y2="448.8" stroke="#B00000" stroke-width="1.6" /><line x1="1289.0" y1="950.1" x2="1289.6" y2="930.1" stroke="#B00000" stroke-width="1.6" /><line x1="1753.5" y1="758.9" x2="1756.1" y2="741.5" stroke="#B00000" stroke-width="1.6" /><line x1="1236.7" y1="908.5" x2="1237.0" y2="889.0" stroke="#B00000" stroke-width="1.6" /><line x1="1055.1" y1="847.7" x2="1054.6" y2="830.5" stroke="#B00000" stroke-width="1.6" /><line x1="984.7" y1="786.8" x2="983.9" y2="770.4" stroke="#B00000" stroke-width="1.6" /><line x1="922.2" y1="732.7" x2="921.2" y2="717.0" stroke="#B00000" stroke-width="1.6" /><line x1="866.4" y1="684.4" x2="865.2" y2="669.3" stroke="#B00000" stroke-width="1.6" /><line x1="816.2" y1="640.9" x2="814.9" y2="626.5" stroke="#B00000" stroke-width="1.6" /><line x1="770.9" y1="601.7" x2="769.5" y2="587.8" stroke="#B00000" stroke-width="1.6" /><line x1="729.7" y1="566.0" x2="728.2" y2="552.7" stroke="#B00000" stroke-width="1.6" /><line x1="692.1" y1="533.5" x2="690.6" y2="520.7" stroke="#B00000" stroke-width="1.6" /><line x1="657.7" y1="503.7" x2="656.2" y2="491.3" stroke="#B00000" stroke-width="1.6" /><line x1="626.1" y1="476.3" x2="624.5" y2="464.4" stroke="#B00000" stroke-width="1.6" /><line x1="596.9" y1="451.1" x2="595.3" y2="439.5" stroke="#B00000" stroke-width="1.6" /><line x1="1177.7" y1="860.8" x2="1177.7" y2="843.5" stroke="#B00000" stroke-width="1.6" /><line x1="1306.0" y1="814.1" x2="1306.6" y2="797.4" stroke="#B00000" stroke-width="1.6" /><line x1="1423.2" y1="771.5" x2="1424.2" y2="755.4" stroke="#B00000" stroke-width="1.6" /><line x1="1530.6" y1="732.5" x2="1532.0" y2="716.8" stroke="#B00000" stroke-width="1.6" /><line x1="1629.4" y1="696.5" x2="1631.1" y2="681.4" stroke="#B00000" stroke-width="1.6" />
<polygon points="982.3,828.0 1019.1,815.9 1018.5,800.6 981.6,812.6" fill="#FFFFFF"/><text transform="matrix(15.596,-5.095,0.697,15.375,1000.5,814.3)" font-size="0.9" fill="#111" text-anchor="middle" y="0.324" textLength="2.15" lengthAdjust="spacingAndGlyphs">8.09 m</text><polygon points="917.4,769.3 952.8,758.5 952.0,744.0 916.4,754.6" fill="#FFFFFF"/><text transform="matrix(15.013,-4.517,0.901,14.690,934.8,756.6)" font-size="0.9" fill="#111" text-anchor="middle" y="0.324" textLength="2.15" lengthAdjust="spacingAndGlyphs">8.09 m</text><polygon points="859.7,717.0 893.7,707.5 892.8,693.5 858.5,703.0" fill="#FFFFFF"/><text transform="matrix(14.460,-4.031,1.058,14.058,876.3,705.2)" font-size="0.9" fill="#111" text-anchor="middle" y="0.324" textLength="2.15" lengthAdjust="spacingAndGlyphs">8.09 m</text><polygon points="808.0,670.3 840.8,661.7 839.7,648.3 806.7,656.8" fill="#FFFFFF"/><text transform="matrix(13.938,-3.620,1.177,13.475,823.9,659.3)" font-size="0.9" fill="#111" text-anchor="middle" y="0.324" textLength="2.15" lengthAdjust="spacingAndGlyphs">8.09 m</text><polygon points="761.4,628.2 793.1,620.4 791.9,607.6 760.1,615.2" fill="#FFFFFF"/><text transform="matrix(13.445,-3.268,1.268,12.935,776.7,617.8)" font-size="0.9" fill="#111" text-anchor="middle" y="0.324" textLength="2.15" lengthAdjust="spacingAndGlyphs">8.09 m</text><polygon points="719.3,590.1 749.9,583.0 748.6,570.7 717.9,577.6" fill="#FFFFFF"/><text transform="matrix(12.981,-2.965,1.337,12.435,734.0,580.3)" font-size="0.9" fill="#111" text-anchor="middle" y="0.324" textLength="2.15" lengthAdjust="spacingAndGlyphs">8.09 m</text><polygon points="681.0,555.4 710.6,549.0 709.2,537.1 679.6,543.4" fill="#FFFFFF"/><text transform="matrix(12.545,-2.703,1.389,11.970,695.2,546.2)" font-size="0.9" fill="#111" text-anchor="middle" y="0.324" textLength="2.15" lengthAdjust="spacingAndGlyphs">8.09 m</text><polygon points="646.0,523.8 674.6,517.9 673.2,506.4 644.6,512.2" fill="#FFFFFF"/><text transform="matrix(12.134,-2.473,1.427,11.538,659.7,515.1)" font-size="0.9" fill="#111" text-anchor="middle" y="0.324" textLength="2.15" lengthAdjust="spacingAndGlyphs">8.09 m</text><polygon points="614.0,494.8 641.6,489.4 640.2,478.3 612.5,483.6" fill="#FFFFFF"/><text transform="matrix(11.746,-2.271,1.454,11.134,627.1,486.5)" font-size="0.9" fill="#111" text-anchor="middle" y="0.324" textLength="2.15" lengthAdjust="spacingAndGlyphs">8.09 m</text><polygon points="584.4,468.1 611.2,463.1 609.8,452.4 582.9,457.3" fill="#FFFFFF"/><text transform="matrix(11.381,-2.093,1.472,10.757,597.1,460.2)" font-size="0.9" fill="#111" text-anchor="middle" y="0.324" textLength="2.15" lengthAdjust="spacingAndGlyphs">8.09 m</text><polygon points="1239.5,850.9 1268.1,840.3 1268.4,824.8 1239.7,835.2" fill="#FFFFFF"/><text transform="matrix(14.609,-5.338,-0.315,15.639,1254.0,837.8)" font-size="0.9" fill="#111" text-anchor="middle" y="0.324" font-style="italic" textLength="1.75" lengthAdjust="spacingAndGlyphs">8.8 m</text><polygon points="1364.0,805.0 1390.0,795.4 1390.9,780.4 1364.7,789.9" fill="#FFFFFF"/><text transform="matrix(13.329,-4.870,-0.779,15.108,1377.5,792.7)" font-size="0.9" fill="#111" text-anchor="middle" y="0.324" font-style="italic" textLength="1.75" lengthAdjust="spacingAndGlyphs">8.8 m</text><polygon points="1477.7,763.1 1501.6,754.3 1502.8,739.8 1478.8,748.5" fill="#FFFFFF"/><text transform="matrix(12.210,-4.461,-1.164,14.609,1490.3,751.5)" font-size="0.9" fill="#111" text-anchor="middle" y="0.324" font-style="italic" textLength="1.75" lengthAdjust="spacingAndGlyphs">8.8 m</text><polygon points="1582.0,724.7 1604.0,716.6 1605.5,702.6 1583.5,710.6" fill="#FFFFFF"/><text transform="matrix(11.226,-4.102,-1.483,14.139,1593.8,713.6)" font-size="0.9" fill="#111" text-anchor="middle" y="0.324" font-style="italic" textLength="1.75" lengthAdjust="spacingAndGlyphs">8.8 m</text><text transform="matrix(13.877,-3.271,1.592,12.942,675.0,618.0)" font-size="0.85" fill="#333" text-anchor="middle" y="0.306" font-style="italic" textLength="2.3" lengthAdjust="spacingAndGlyphs">80.9 m</text><text transform="matrix(13.156,-5.593,-1.688,15.903,1583.0,861.9)" font-size="0.85" fill="#333" text-anchor="middle" y="0.306" font-style="italic" textLength="2.3" lengthAdjust="spacingAndGlyphs">35.2 m</text><text transform="matrix(11.030,-3.532,-1.762,14.797,1665.9,581.9)" font-size="0.85" fill="#333" text-anchor="middle" y="0.306" font-style="italic" textLength="1.8" lengthAdjust="spacingAndGlyphs">2.5 m</text><text transform="matrix(10.970,-3.646,-1.740,14.594,1663.1,611.0)" font-size="0.85" fill="#333" text-anchor="middle" y="0.306" font-style="italic" textLength="1.8" lengthAdjust="spacingAndGlyphs">1.5 m</text><text transform="matrix(10.870,-3.820,-1.698,14.256,1657.0,657.7)" font-size="0.85" fill="#333" text-anchor="middle" y="0.306" font-style="italic" textLength="1.2" lengthAdjust="spacingAndGlyphs">5 m</text><text transform="matrix(11.008,-3.974,-2.009,14.859,1722.0,656.7)" font-size="0.85" fill="#333" text-anchor="middle" y="0.306" font-style="italic" textLength="1.2" lengthAdjust="spacingAndGlyphs">9 m</text>
<polygon points="1093.8,818.7 1104.5,815.1 1104.2,798.0 1093.4,801.6" fill="#FFFFFF"/><text transform="matrix(15.273,-5.128,0.310,15.592,1099.0,808.4)" font-size="0.95" fill="#000" text-anchor="middle" y="0.342" textLength="0.45" lengthAdjust="spacingAndGlyphs">1</text><polygon points="1021.8,760.1 1032.1,756.9 1031.5,740.6 1021.2,743.8" fill="#FFFFFF"/><text transform="matrix(14.734,-4.539,0.565,14.888,1026.7,750.4)" font-size="0.95" fill="#000" text-anchor="middle" y="0.342" textLength="0.45" lengthAdjust="spacingAndGlyphs">2</text><polygon points="957.8,708.0 967.8,705.1 967.0,689.6 957.0,692.4" fill="#FFFFFF"/><text transform="matrix(14.217,-4.046,0.763,14.239,962.4,698.8)" font-size="0.95" fill="#000" text-anchor="middle" y="0.342" textLength="0.45" lengthAdjust="spacingAndGlyphs">3</text><polygon points="900.6,661.4 910.2,658.8 909.3,643.9 899.6,646.4" fill="#FFFFFF"/><text transform="matrix(13.725,-3.629,0.916,13.640,904.9,652.7)" font-size="0.95" fill="#000" text-anchor="middle" y="0.342" textLength="0.45" lengthAdjust="spacingAndGlyphs">4</text><polygon points="849.1,619.5 858.4,617.2 857.3,602.8 848.0,605.1" fill="#FFFFFF"/><text transform="matrix(13.257,-3.273,1.036,13.087,853.2,611.2)" font-size="0.95" fill="#000" text-anchor="middle" y="0.342" textLength="0.45" lengthAdjust="spacingAndGlyphs">5</text><polygon points="802.6,581.6 811.6,579.5 810.3,565.7 801.3,567.8" fill="#FFFFFF"/><text transform="matrix(12.814,-2.967,1.129,12.575,806.5,573.6)" font-size="0.95" fill="#000" text-anchor="middle" y="0.342" textLength="0.45" lengthAdjust="spacingAndGlyphs">6</text><polygon points="760.3,547.1 768.9,545.2 767.6,531.9 758.9,533.8" fill="#FFFFFF"/><text transform="matrix(12.395,-2.701,1.201,12.099,763.9,539.5)" font-size="0.95" fill="#000" text-anchor="middle" y="0.342" textLength="0.45" lengthAdjust="spacingAndGlyphs">7</text><polygon points="721.6,515.6 730.0,513.9 728.7,501.1 720.2,502.8" fill="#FFFFFF"/><text transform="matrix(11.999,-2.470,1.257,11.657,725.1,508.4)" font-size="0.95" fill="#000" text-anchor="middle" y="0.342" textLength="0.45" lengthAdjust="spacingAndGlyphs">8</text><polygon points="686.2,486.8 694.4,485.2 693.0,472.9 684.8,474.5" fill="#FFFFFF"/><text transform="matrix(11.625,-2.267,1.299,11.245,689.6,479.9)" font-size="0.95" fill="#000" text-anchor="middle" y="0.342" textLength="0.45" lengthAdjust="spacingAndGlyphs">9</text><polygon points="650.8,460.8 664.4,458.3 662.9,446.4 649.3,448.9" fill="#FFFFFF"/><text transform="matrix(11.270,-2.088,1.331,10.860,656.9,453.6)" font-size="0.95" fill="#000" text-anchor="middle" y="0.342" textLength="0.9" lengthAdjust="spacingAndGlyphs">10</text><text transform="matrix(10.935,-1.929,1.354,10.500,626.7,429.4)" font-size="0.95" fill="#000" text-anchor="middle" y="0.342" textLength="0.9" lengthAdjust="spacingAndGlyphs">11</text><polygon points="1143.4,823.1 1152.5,820.0 1152.4,802.9 1143.3,806.0" fill="#FFFFFF"/><text transform="matrix(15.049,-5.164,0.114,15.609,1147.9,813.0)" font-size="0.95" fill="#000" text-anchor="middle" y="0.342">A</text><polygon points="1270.7,779.1 1279.0,776.2 1279.4,759.7 1271.1,762.5" fill="#FFFFFF"/><text transform="matrix(13.740,-4.715,-0.380,15.078,1275.1,769.4)" font-size="0.95" fill="#000" text-anchor="middle" y="0.342">B</text><polygon points="1387.2,738.8 1394.8,736.1 1395.7,720.2 1388.0,722.8" fill="#FFFFFF"/><text transform="matrix(12.595,-4.322,-0.791,14.579,1391.4,729.5)" font-size="0.95" fill="#000" text-anchor="middle" y="0.342" font-style="italic">C</text><polygon points="1494.1,701.7 1501.1,699.3 1502.3,683.9 1495.4,686.3" fill="#FFFFFF"/><text transform="matrix(11.587,-3.976,-1.135,14.109,1498.2,692.8)" font-size="0.95" fill="#000" text-anchor="middle" y="0.342" font-style="italic">D</text><polygon points="1592.6,667.6 1599.1,665.4 1600.6,650.4 1594.2,652.6" fill="#FFFFFF"/><text transform="matrix(10.696,-3.670,-1.424,13.667,1596.6,659.0)" font-size="0.95" fill="#000" text-anchor="middle" y="0.342" font-style="italic">E</text>
</g>
</svg></body></html>
